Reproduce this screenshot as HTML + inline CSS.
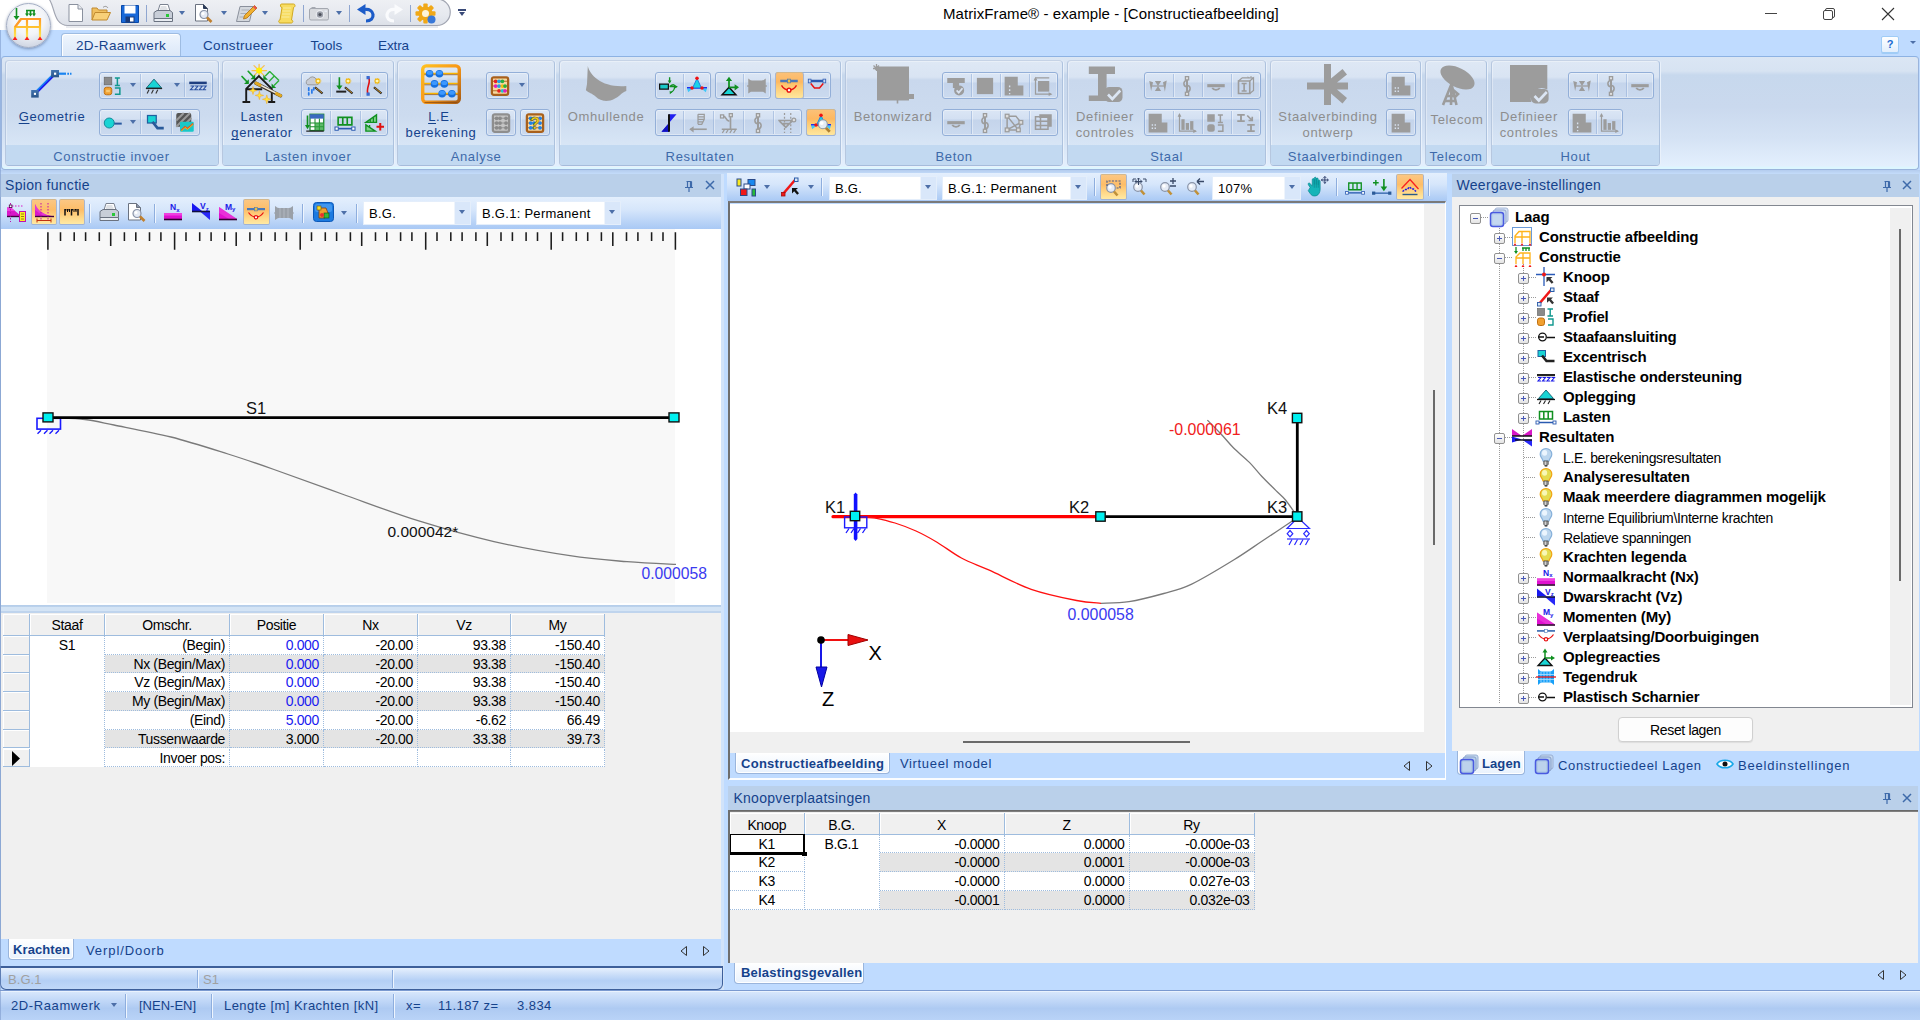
<!DOCTYPE html>
<html lang="nl"><head><meta charset="utf-8"><title>MatrixFrame - example - [Constructieafbeelding]</title>
<style>
*{box-sizing:border-box}
html,body{margin:0;padding:0}
body{width:1920px;height:1020px;position:relative;overflow:hidden;background:#bfdbff;font-family:"Liberation Sans",sans-serif;font-size:13px;color:#000}
.a{position:absolute}
.ui{font-family:"Liberation Sans",sans-serif;font-size:13px;letter-spacing:.65px;color:#15428b;white-space:nowrap}
.ms{font-family:"Liberation Sans",sans-serif;font-size:14px;letter-spacing:-.35px;white-space:nowrap;color:#000}
.c{text-align:center}
.r{text-align:right}
svg{position:absolute;overflow:visible}
.grp{position:absolute;top:59.9px;height:105.9px;border:1px solid #aac0de;border-color:#c6d3e6 #adc2de #a6bcdb #b6c7df;border-radius:4px;background:linear-gradient(#dee8f5 0,#d9e4f3 16px,#c9d8ed 19px,#ccdbef 55px,#d8e6f6 85px);box-shadow:1px 0 0 #e9f1fb, 0 1px 0 #e9f1fb, inset 1px 1px 0 rgba(255,255,255,.35)}
.grp .lab{position:absolute;left:0;right:0;bottom:0;height:20px;background:#c2d9f1;border-radius:0 0 3px 3px;text-align:center;line-height:23px;color:#3e6aaa}
.sg{position:absolute;height:27px;border:1px solid #93afd8;border-radius:3px;background:linear-gradient(#dbe6f5 0,#d3e0f2 9px,#c4d4eb 10px,#cbdaef 100%);box-shadow:inset 0 0 0 1px rgba(255,255,255,.35)}
.sg i{position:absolute;top:1px;bottom:1px;width:1px;background:rgba(150,176,216,.6);box-shadow:1px 0 0 rgba(255,255,255,.4)}
u{text-decoration-skip-ink:none;text-underline-offset:1.5px}
.hot{position:absolute;top:-1px;bottom:-1px;border:1px solid #c2a36b;border-color:#d4b88c #a9b6cf #9fb2d4 #a9b6cf;border-radius:3px;background:linear-gradient(#fbc178 0,#fdb861 9px,#fdc66f 12px,#ffe79c 100%)}
.big{position:absolute;text-align:center;line-height:16px}
.dis{color:#8d8d8d}
.hdr{position:absolute;height:23px;background:#bad0ea;line-height:22px;padding-left:5px;font-size:14px !important;letter-spacing:.3px !important}
.tb{position:absolute;background:linear-gradient(#e4effd 0,#d6e6fb 40%,#b4d0f6 85%,#a9c9f5 100%)}
.combo{position:absolute;height:24px;background:#fff;border:1px solid #e4eefb;font-size:13px;letter-spacing:.28px;line-height:23.5px;padding-left:5px;color:#000;white-space:nowrap}
.combo b{position:absolute;right:0;top:0;bottom:0;width:16px;background:#d9e7fa;border-left:1px solid #eef4fc}
.combo b:after{content:"";position:absolute;left:4px;top:8px;border:3.5px solid transparent;border-top:4px solid #4d6fa8;border-bottom:0}
.dd{position:absolute;width:0;height:0;border:3.5px solid transparent;border-top:4px solid #4d6fa8;border-bottom:0}
.tabstrip{position:absolute;height:24px;background:#bfdbff}
.tab{position:absolute;top:0;height:21px;border:1px solid #9ab5dc;border-top:0;border-radius:0 0 4px 4px;background:linear-gradient(#fff,#e9f2fd);line-height:19px;font-weight:bold;letter-spacing:.1px;padding:0 5px;color:#15428b;box-shadow:inset 0 0 0 1px #fff}
.gh{position:absolute;background:#f0f0f0;border-right:1px solid #9ebcde;border-bottom:1px solid #9ebcde;box-shadow:inset 1px 1px 0 #fff;text-align:center;line-height:22px;height:21px}
.gc{position:absolute;height:19px;line-height:18px;padding:0 4px;border-right:1px dotted #9ebcde;border-bottom:1px dotted #9ebcde;background:#fff}
.tr{position:absolute;left:0;height:20px;line-height:19px;font-family:"Liberation Sans",sans-serif;font-size:14.5px;letter-spacing:.25px;white-space:nowrap;color:#000}
.tr b{letter-spacing:.15px}
</style></head>
<body>
<!-- top -->
<div class="a" style="left:0;top:0;width:1920px;height:30px;background:#fff"></div>
<div class="a" style="left:0;top:30px;width:1920px;height:27px;background:#bfdbff"></div>
<svg style="left:0;top:0" width="470" height="30" viewBox="0 0 470 30"><defs><linearGradient id="qg" x1="0" y1="0" x2="0" y2="1"><stop offset="0" stop-color="#eef0f4"/><stop offset=".6" stop-color="#e6e9ef"/><stop offset="1" stop-color="#dce0e8"/></linearGradient></defs><path d="M49 -1C55 6 53 25.500 68 25.500H437A13.200 13.200 0 0 0 437 -1Z" fill="url(#qg)" stroke="#a2a6b2" stroke-width="1.200"/><path d="M66 27H438" stroke="#d4d8e0" stroke-width="1"/></svg>
<div class="a" style="left:6px;top:3px;width:45px;height:45px;border-radius:50%;background:radial-gradient(circle at 50% 35%,#ffffff 0,#f2f4f8 45%,#d4dae6 75%,#b8c2d4 100%);border:1px solid #a4aec4;box-shadow:0 1px 3px rgba(60,80,120,.55)"></div>
<svg style="left:11px;top:7px" width="34" height="36" viewBox="0 0 34 36"><defs><linearGradient id="og" x1="0" y1="0" x2="0" y2="1"><stop offset="0" stop-color="#ff9a2a"/><stop offset=".5" stop-color="#ffc830"/><stop offset="1" stop-color="#ffe860"/></linearGradient></defs><path d="M4 31V20L10 12h19v19M4 20h25M16 12v19" fill="none" stroke="url(#og)" stroke-width="2.200"/><path d="M4 20 10 12" stroke="#ff9a2a" stroke-width="2"/><path d="M1.500 33 4 29.500 6.500 33ZM13.500 33 16 29.500 18.500 33ZM26.500 33 29 29.500 31.500 33Z" fill="#f82020"/><g stroke="#109020" stroke-width="1.600" fill="none"><path d="M5.500 1v10M15 3.500h9M16 3.500V7M19.500 3.500V7M23 3.500V7"/></g><path d="M2.500 9l3 4 3-4ZM14 6.500l2 3 2-3ZM17.500 6.500l2 3 2-3ZM21 6.500l2 3 2-3Z" fill="#109020"/></svg>
<svg style="left:68px;top:4px" width="16" height="18" viewBox="0 0 16 18"><path d="M1 .5h9l4.500 4.500v12.500H1Z" fill="#fff" stroke="#8a919e" stroke-width="1"/><path d="M10 .5V5h4.500" fill="#e8ebf0" stroke="#8a919e" stroke-width="1"/></svg>
<svg style="left:91px;top:5px" width="20" height="16" viewBox="0 0 20 16"><path d="M1 15V3h5l1.500 2H16v3" fill="#f0c060" stroke="#c08a30" stroke-width="1"/><path d="M1 15 4 7.500h15.500L16 15Z" fill="#f8d078" stroke="#c08a30" stroke-width="1"/><path d="M12 2.500c2-2 4-1 5 .5" fill="none" stroke="#909090" stroke-width="1"/></svg>
<svg style="left:121px;top:5px" width="18" height="18" viewBox="0 0 18 18"><path d="M.5.5h17v17H.5Z" fill="#1868d8" stroke="#0848a8"/><rect x="3.500" y="0.500" width="11" height="8" fill="#fff"/><rect x="4.500" y="11.500" width="9" height="6" fill="#1a3a78"/><rect x="9" y="12.500" width="3.500" height="4" fill="#fff"/></svg>
<div class="a" style="left:146px;top:5px;width:1px;height:17px;background:#8fa6d0"></div>
<svg style="left:153px;top:4px" width="20" height="19" viewBox="0 0 20 19"><path d="M5 7 7 .5h8L17 7Z" fill="#fff" stroke="#7a8290" stroke-width="1"/><path d="M7.500 3h6M7 5h7.500" stroke="#b0b6c0" stroke-width=".8"/><path d="M1 8.500 4 6.500h13l2.500 2v6H1Z" fill="#c8ced8" stroke="#6a7280" stroke-width="1"/><path d="M1 14.500h18.500v3H1Z" fill="#e8ecf2" stroke="#6a7280" stroke-width="1"/><rect x="13" y="10" width="3" height="3" fill="#28c838"/></svg>
<div class="dd" style="left:179px;top:11px"></div>
<svg style="left:194px;top:4px" width="20" height="20" viewBox="0 0 20 20"><path d="M1.500 .5h8L13.500 4.500V17h-12Z" fill="#fff" stroke="#6a7280" stroke-width="1"/><path d="M9.500 .5V4.500h4" fill="#2a3a58" stroke="#2a3a58"/><circle cx="10" cy="10.500" r="4" fill="#e4eaf4" stroke="#8a94a8" stroke-width="1.200"/><circle cx="9" cy="9.500" r="1.500" fill="#fff"/><path d="M13 13.500 17.500 18" stroke="#c08030" stroke-width="2.600"/></svg>
<div class="dd" style="left:221px;top:11px"></div>
<svg style="left:236px;top:4px" width="22" height="20" viewBox="0 0 22 20"><path d="M4 2.500h13l-3.500 15H.5Z" fill="#d4d8de" stroke="#8a909c" stroke-width="1"/><path d="M5.500 6h8M4.500 9.500h8M3.500 13h6" stroke="#a8aeb8" stroke-width="1"/><path d="M18.500 1.500 21 4 11 14l-3.500 1 1-3.500Z" fill="#f0b030" stroke="#b07010" stroke-width=".8"/><path d="M18.500 1.500 21 4l-1.500 1.500L17 3Z" fill="#e85050"/></svg>
<div class="dd" style="left:262px;top:11px"></div>
<svg style="left:277px;top:3px" width="20" height="21" viewBox="0 0 20 21"><path d="M4.500 1h12c2 0 2 3 0 3.500l-2 12.500c1.500 0 2 2.500 0 3H3c-2-.5-1.500-3 0-3L5 4.500c-2 0-2-3.500-.5-3.500Z" fill="#f8dc60" stroke="#d0a820" stroke-width="1"/><path d="M6 5h8M5.500 8h8M5 11h8M4.500 14h8" stroke="#f8eca0" stroke-width="1"/></svg>
<div class="a" style="left:303px;top:5px;width:1px;height:17px;background:#8fa6d0"></div>
<svg style="left:309px;top:7px" width="20" height="14" viewBox="0 0 20 14"><rect x=".5" y="1.500" width="19" height="11.500" rx="1.500" fill="#d8dade" stroke="#a4a8b0"/><rect x="2.500" y="0" width="4" height="2" fill="#a4a8b0"/><circle cx="11" cy="7.500" r="3.800" fill="#9a9ea8" stroke="#eceef2" stroke-width="1.200"/><circle cx="11" cy="7.500" r="1.600" fill="#4a4e58"/><rect x="15.500" y="3.500" width="2.500" height="1.500" fill="#e8ecf4"/></svg>
<div class="dd" style="left:336px;top:11px"></div>
<div class="a" style="left:349px;top:5px;width:1px;height:17px;background:#8fa6d0"></div>
<svg style="left:356px;top:4px" width="20" height="19" viewBox="0 0 20 19"><path d="M10 17c5 0 7.500-3 7-6.500C16.500 7 13.500 5 9 5.500" fill="none" stroke="#1c5cc8" stroke-width="3.200"/><path d="M1 5.500 9.500 0v11Z" fill="#1c5cc8"/></svg>
<svg style="left:384px;top:4px" width="20" height="19" viewBox="0 0 20 19"><path d="M10 17c-5 0-7.500-3-7-6.500C3.500 7 6.500 5 11 5.500" fill="none" stroke="#fafbfd" stroke-width="3.200"/><path d="M19 5.500 10.500 0v11Z" fill="#fafbfd"/></svg>
<div class="a" style="left:410px;top:5px;width:1px;height:17px;background:#8fa6d0"></div>
<svg style="left:415px;top:3px" width="22" height="22" viewBox="0 0 22 22"><g transform="translate(10.500 10.500)"><g fill="#f0a818"><rect x="-2.200" y="-10" width="4.400" height="20" rx="1" transform="rotate(0)"/><rect x="-2.200" y="-10" width="4.400" height="20" rx="1" transform="rotate(45)"/><rect x="-2.200" y="-10" width="4.400" height="20" rx="1" transform="rotate(90)"/><rect x="-2.200" y="-10" width="4.400" height="20" rx="1" transform="rotate(135)"/></g><circle r="7" fill="#f0a818"/><circle r="3.500" fill="#fdf4d8"/></g><circle cx="16.500" cy="16.500" r="4" fill="#3878d8"/></svg>
<div class="a" style="left:458px;top:9px;width:8px;height:1.500px;background:#3a4a78"></div><div class="dd" style="left:458.500px;top:12px;border-top-color:#3a4a78"></div>
<div class="a" style="left:943px;top:5px;font-size:15px;letter-spacing:.08px;color:#000;white-space:nowrap;line-height:18px">MatrixFrame® - example - [Constructieafbeelding]</div>
<div class="a" style="left:1765px;top:13px;width:12px;height:1px;background:#444"></div>
<svg style="left:1823px;top:8px" width="12" height="12" viewBox="0 0 12 12"><rect x=".5" y="2.500" width="9" height="9" rx="1.500" fill="none" stroke="#444" stroke-width="1"/><path d="M2.500 2.500V2A1.500 1.500 0 0 1 4 .5h6A1.500 1.500 0 0 1 11.500 2v6A1.500 1.500 0 0 1 10 9.500h-.5" fill="none" stroke="#444" stroke-width="1"/></svg>
<svg style="left:1882px;top:8px" width="12" height="12" viewBox="0 0 12 12"><path d="M0 0 12 12M12 0 0 12" stroke="#333" stroke-width="1.100"/></svg>
<div class="a" style="left:61px;top:33px;width:120px;height:25px;border:1px solid #9ebce2;border-bottom:0;border-radius:4px 4px 0 0;background:linear-gradient(#f0f6fd,#e4eefb 50%,#dbe7f6);box-shadow:inset 1px 1px 0 #fff"></div>
<div class="a ui" style="left:76px;top:38px;line-height:16px;font-size:13.500px;letter-spacing:0.35px">2D-Raamwerk</div>
<div class="a ui" style="left:203px;top:38px;line-height:16px;font-size:13.500px;letter-spacing:0.35px">Construeer</div>
<div class="a ui" style="left:310.5px;top:38px;line-height:16px;font-size:13.500px;letter-spacing:0.08px">Tools</div>
<div class="a ui" style="left:378px;top:38px;line-height:16px;font-size:13.500px;letter-spacing:-0.12px">Extra</div>
<div class="a" style="left:1881px;top:36px;width:18px;height:17px;border:1px solid #a0ccf6;border-radius:2px;background:linear-gradient(#fff,#e2eefc);box-shadow:0 1px 0 #a0ccf6;font-weight:bold;font-size:11px;color:#1a6ad0;text-align:center;line-height:15px">?</div>
<div class="dd" style="left:1910px;top:41px;border-width:3px;border-top-width:3.500px"></div>
<!-- ribbon -->
<div class="a" style="left:1.4px;top:56.2px;width:1917.2px;height:113.5px;border:1px solid #9ab4dc;border-top-color:#8db2e3;border-radius:4px;background:linear-gradient(#dbe6f4 0,#d7e3f2 14px,#c7d8ed 18px,#cad9ee 50px,#d4e2f4 80px,#e3effd 108px);box-shadow:inset 0 -2.5px 0 #ddf6ff"></div>
<div class="a" style="left:0;top:169.7px;width:1920px;height:4.3px;background:linear-gradient(#b4ccee,#c4dcfa)"></div>
<div class="grp" style="left:4.5px;width:214px"><div class="lab ui" style="color:#3e6aaa">Constructie invoer</div></div>
<div class="grp" style="left:222.4px;width:171.5px"><div class="lab ui" style="color:#3e6aaa">Lasten invoer</div></div>
<div class="grp" style="left:397.4px;width:157.4px"><div class="lab ui" style="color:#3e6aaa">Analyse</div></div>
<div class="grp" style="left:558.9px;width:282.1px"><div class="lab ui" style="color:#3e6aaa">Resultaten</div></div>
<div class="grp" style="left:844.9px;width:218.5px"><div class="lab ui" style="color:#3e6aaa">Beton</div></div>
<div class="grp" style="left:1067.4px;width:198.6px"><div class="lab ui" style="color:#3e6aaa">Staal</div></div>
<div class="grp" style="left:1270px;width:150.8px"><div class="lab ui" style="color:#3e6aaa">Staalverbindingen</div></div>
<div class="grp" style="left:1424.8px;width:62.6px"><div class="lab ui" style="color:#3e6aaa">Telecom</div></div>
<div class="grp" style="left:1491.4px;width:168.3px"><div class="lab ui" style="color:#3e6aaa">Hout</div></div>
<svg style="left:30px;top:68px" width="44" height="32" viewBox="0 0 44 32"><defs><linearGradient id="gsq" x1="0" y1="0" x2="0" y2="1"><stop offset="0" stop-color="#4274b0"/><stop offset="1" stop-color="#2a5488"/></linearGradient></defs><path d="M5 25.800 25 5.700" stroke="#1a1af0" stroke-width="2.800"/><path d="M4.300 25.100 24.300 5" stroke="#1a8af4" stroke-width="1.400"/><path d="M29 5.700h7" stroke="#1a84f0" stroke-width="2.200"/><path d="M37.300 5.700h1.700M40 5.700h1.500" stroke="#1a84f0" stroke-width="2"/><rect x="1.200" y="22" width="7.500" height="7.600" fill="url(#gsq)"/><rect x="3.900" y="24.800" width="2.100" height="2.100" fill="#fff"/><rect x="21.100" y="2" width="7.900" height="7.300" fill="url(#gsq)"/><rect x="24" y="4.600" width="2.200" height="2.200" fill="#fff"/></svg><div class="big ui " style="left:-8px;top:109px;width:120px"><u>G</u>eometrie</div>
<svg style="left:241px;top:64px" width="40" height="40" viewBox="0 0 40 40"><g stroke="#f8c050" stroke-width="1.300" stroke-linecap="round"><path d="M18.100 0.500v12M11 6.600h14.500M13 1.600l10.200 10M23.200 1.600l-10.200 10"/></g><circle cx="18.100" cy="6.600" r="3" fill="#fff000"/><g stroke="#18a028" stroke-width="1.700" stroke-linecap="round"><path d="M1 12.500l5.500 5.800M7.200 7.300l5.500 6"/></g><path d="M7.800 15.200v4.800H3ZM14.200 10.400v4.800H9.400Z" fill="#109020"/><g fill="none" stroke="#2cb038" stroke-width="1.400"><path d="M28.700 7.600l9.300 8.800M28.700 7.600l-4.600 4.600M33.300 12l-5.300 5.400M38 16.400l-5 5"/></g><path d="M22.300 11v4.700h4.700ZM30.600 19.500v4.600h4.600Z" fill="#109020"/><g fill="none" stroke="#1a1a1a" stroke-width="1.900" stroke-linejoin="miter"><path d="M5.200 37.500V24.800L17.900 12l12.900 12.800V37.500M5.200 25.300h16"/></g><path d="M1.500 38h7.700M27.200 38h7" stroke="#1a1a1a" stroke-width="1.800"/><path d="M15 19.300 39.500 31.700" stroke="#3a3020" stroke-width="3.400" stroke-linecap="round"/><path d="M15 19 39.500 31.300" stroke="#e8e4d8" stroke-width="1.600" stroke-linecap="round"/><path d="M15 19.200l4 2M35.500 29.600l4 2" stroke="#e0a820" stroke-width="3" stroke-linecap="round"/><path d="M12 22.5L12.88 25.62L16 26.5L12.88 27.38L12 30.5L11.12 27.38L8 26.5L11.12 25.62Z" fill="#ffe838" stroke="#f0a020" stroke-width=".5"/><path d="M18.4 27.2L19.323999999999998 30.476L22.599999999999998 31.4L19.323999999999998 32.324L18.4 35.6L17.476 32.324L14.2 31.4L17.476 30.476Z" fill="#ffe838" stroke="#f0a020" stroke-width=".5"/><path d="M25.8 30.9L26.768 34.331999999999994L30.200000000000003 35.3L26.768 36.268L25.8 39.699999999999996L24.832 36.268L21.4 35.3L24.832 34.331999999999994Z" fill="#ffe838" stroke="#f0a020" stroke-width=".5"/></svg><div class="big ui " style="left:202px;top:109px;width:120px">Lasten<br><u>g</u>enerator</div>
<svg style="left:421.2px;top:63.7px" width="40" height="40" viewBox="0 0 40 40"><defs><linearGradient id="abg" x1="0" y1="0" x2="1" y2="1"><stop offset="0" stop-color="#ffc020"/><stop offset=".5" stop-color="#f89818"/><stop offset="1" stop-color="#a85c14"/></linearGradient></defs><path d="M3 9.5 h34" stroke="#f8b400" stroke-width="1.500"/><path d="M3 10.700000000000001 h34" stroke="#9a5a18" stroke-width=".8"/><path d="M3 19.599999999999998 h34" stroke="#f8b400" stroke-width="1.500"/><path d="M3 20.799999999999997 h34" stroke="#9a5a18" stroke-width=".8"/><path d="M3 29.4 h34" stroke="#f8b400" stroke-width="1.500"/><path d="M3 30.599999999999998 h34" stroke="#9a5a18" stroke-width=".8"/><rect x="1.700" y="1.900" width="36.600" height="36.400" rx="3.500" fill="none" stroke="url(#abg)" stroke-width="3.400"/><path d="M3.500 38.500h33" stroke="#8a4a10" stroke-width="1.200" opacity=".7"/><circle cx="8.6" cy="9.8" r="3.800" fill="#1470e0"/><ellipse cx="8.6" cy="8.8" rx="3" ry="2" fill="#3c98ff"/><circle cx="18.4" cy="9.8" r="3.800" fill="#1470e0"/><ellipse cx="18.4" cy="8.8" rx="3" ry="2" fill="#3c98ff"/><circle cx="13.5" cy="19.9" r="3.800" fill="#1470e0"/><ellipse cx="13.5" cy="18.9" rx="3" ry="2" fill="#3c98ff"/><circle cx="23.3" cy="19.9" r="3.800" fill="#1470e0"/><ellipse cx="23.3" cy="18.9" rx="3" ry="2" fill="#3c98ff"/><circle cx="21.1" cy="29.8" r="3.800" fill="#1470e0"/><ellipse cx="21.1" cy="28.8" rx="3" ry="2" fill="#3c98ff"/><circle cx="30.9" cy="29.8" r="3.800" fill="#1470e0"/><ellipse cx="30.9" cy="28.8" rx="3" ry="2" fill="#3c98ff"/></svg><div class="big ui " style="left:381px;top:109px;width:120px"><u>L</u>.E.<br>berekening</div>
<svg style="left:585px;top:66px" width="43" height="37" viewBox="0 0 43 37"><path d="M2.800 0C5 10 18 22 41.300 20V25C36 27 34 31 30 32.500 26 35 22 35 18.800 34.800 14 34 11 31 9.400 29.500 6 27 2 26 .900 24L2 18Z" fill="#9c9c9c"/></svg><div class="big ui dis" style="left:546px;top:109px;width:120px;color:#8d8d8d">Omhullende</div>
<svg style="left:871.5px;top:64px" width="43" height="40" viewBox="0 0 43 40"><path d="M5 2.500h32v34H5Z" fill="#9c9c9c"/><path d="M1 4.500h6M4.500 0v7M1.500 1.500l5 5M7 1.500l-4 4" stroke="#9c9c9c" stroke-width="1.300"/><path d="M37 30h5v5h-5Z" fill="#9c9c9c"/><path d="M25.500 36v3.500" stroke="#9c9c9c" stroke-width="1.600"/></svg><div class="big ui dis" style="left:833px;top:109px;width:120px;color:#8d8d8d">Betonwizard</div>
<svg style="left:1088px;top:66px" width="35" height="36" viewBox="0 0 35 36"><path d="M.800 .400h26.200v7.600h-8.400v21.500H20V35H.800v-5.500H10V8H.800Z" fill="#9c9c9c"/><rect x="16.700" y="21" width="17.800" height="15" rx="4.500" fill="#9c9c9c"/><path d="M20 28.500l4.300 4.500 8-8.500" fill="none" stroke="#dbe5f3" stroke-width="2.600"/></svg><div class="big ui dis" style="left:1045px;top:109px;width:120px;color:#8d8d8d">Definieer<br>controles</div>
<svg style="left:1307px;top:63.5px" width="41" height="41" viewBox="0 0 41 41"><path d="M17 0h7v14.500L35.500 5l4.500 5.500-10 8H41v7H30l10 8.500L35.500 39.500 24 29.500V41h-7V25.500H0V18.500h17Z" fill="#9c9c9c"/></svg><div class="big ui dis" style="left:1268px;top:109px;width:120px;color:#8d8d8d">Staalverbinding<br>ontwerp</div>
<svg style="left:1438px;top:65px" width="38" height="41" viewBox="0 0 38 41"><ellipse cx="19.500" cy="12.500" rx="18.500" ry="9.600" transform="rotate(27 19.500 12.500)" fill="#9c9c9c"/><path d="M13.500 19 5 40M13.500 19l5 21M13.500 19l-.5 21M8.500 31h9M6.800 36h11.200M14 24l6 5-4 4" stroke="#9c9c9c" stroke-width="2.600" fill="none"/></svg><div class="big ui dis" style="left:1397px;top:112px;width:120px;color:#8d8d8d">Telecom</div>
<svg style="left:1510px;top:65px" width="39" height="39" viewBox="0 0 39 39"><path d="M0 0h37.300v24.500a11 11 0 0 0-16 12.500H0Z" fill="#9c9c9c"/><rect x="21" y="24" width="17.600" height="14.400" rx="4.500" fill="#9c9c9c"/><path d="M24.500 31l4.300 4.500 8-8.500" fill="none" stroke="#dbe5f3" stroke-width="2.600"/></svg><div class="big ui dis" style="left:1469px;top:109px;width:120px;color:#8d8d8d">Definieer<br>controles</div>
<div class="sg" style="left:99px;top:72.2px;width:114px;height:27.2px"><div class="dd" style="left:30px;top:10px"></div><svg style="left:3px;top:3px" width="20" height="20" viewBox="0 0 16 16"><rect x="1" y="1" width="6" height="6" fill="#8a8a8a" stroke="#6a6a6a" stroke-width=".6"/><rect x="1" y="9" width="6" height="6" rx="1.8" fill="#f0a030" stroke="#c07010" stroke-width=".8"/><rect x="2.5" y="11" width="3" height="2" fill="#f8c870"/><path d="M9.5 1.5h4M9.5 7.5h4M11.5 1.5v6M9.5 9.5h4v5h-4" fill="none" stroke="#11988f" stroke-width="1.2"/></svg><i style="left:40px"></i><div class="dd" style="left:74px;top:10px"></div><svg style="left:44px;top:3px" width="20" height="20" viewBox="0 0 16 16"><path d="M8 2.5 14 9.5H2Z" fill="#19d4d4" stroke="#1a6a78" stroke-width=".8"/><path d="M1.5 10h13" stroke="#222" stroke-width="1"/><path d="M4 11 2.5 14M7.5 11 6 14M11 11 9.5 14" stroke="#333" stroke-width=".9"/></svg><i style="left:84px"></i><svg style="left:88px;top:3px" width="20" height="20" viewBox="0 0 16 16"><rect x="1" y="4.5" width="14" height="2" fill="#1f3f80"/><path d="M2 8h2.5L2 11h2.5M5.5 8H8L5.5 11H8M9 8h2.5L9 11h2.5M12.2 8h2.3l-2.3 3h2.3" fill="none" stroke="#2a50a0" stroke-width=".9"/></svg></div>
<div class="sg" style="left:99px;top:109px;width:101px;height:26.5px"><div class="dd" style="left:30px;top:10px"></div><svg style="left:3px;top:3px" width="20" height="20" viewBox="0 0 16 16"><circle cx="5" cy="8" r="4" fill="#19d4d4" stroke="#158a9a" stroke-width=".8"/><path d="M9 8.5h6" stroke="#2a5aa0" stroke-width="1.6"/></svg><i style="left:40px"></i><svg style="left:45px;top:3px" width="20" height="20" viewBox="0 0 16 16"><rect x="2" y="2" width="7" height="6" fill="#19d4d4" stroke="#2060a0" stroke-width="1"/><path d="M6 7l4 5h5" fill="none" stroke="#2a5a9a" stroke-width="2.2"/></svg><i style="left:71px"></i><svg style="left:75px;top:3px" width="20" height="20" viewBox="0 0 16 16"><rect x="1" y="0" width="12" height="11" rx="1.5" fill="#555"/><path d="M1 6 7 0M1 11 12 0M6 11l7-7" stroke="#999" stroke-width="1.6"/><rect x="4" y="7" width="11" height="8" rx="1" fill="#19c8c8"/><path d="M5 14l3-3 2 1.5 4.5-4" fill="none" stroke="#e8541a" stroke-width="1.3"/><path d="M5 14.6l3-3 2 1.5 4.5-4" fill="none" stroke="#f8d020" stroke-width=".6"/></svg></div>
<div class="sg" style="left:301px;top:72.2px;width:87px;height:27.2px"><svg style="left:3px;top:3px" width="20" height="20" viewBox="0 0 16 16"><path d="M2 7a2.5 2.5 0 0 1 1-4.5 3.2 3.2 0 0 1 6 .6 2 2 0 0 1 0 4Z" fill="#c8ccd4" stroke="#888" stroke-width=".6"/><path d="M3 9.5v2M5.5 11v2.5M3 13.5v1.5M7 9.5v1.5" stroke="#2a7ae8" stroke-width="1.4" stroke-linecap="round"/><path d="M8 9l6 5" stroke="#222" stroke-width="1.8"/><path d="M8.5 9.3l5 4.2" stroke="#e8a020" stroke-width=".7"/><path d="M10.5 1.5v5M8 4h5M8.8 2.2l3.4 3.6M12.2 2.2 8.8 5.8" stroke="#f4b400" stroke-width=".9"/><circle cx="10.5" cy="4" r="1.1" fill="#fff8b0"/></svg><i style="left:28px"></i><svg style="left:33px;top:3px" width="20" height="20" viewBox="0 0 16 16"><path d="M3.5 1v9" stroke="#109020" stroke-width="1.3"/><path d="M1 7.5l2.5 3.5L6 7.5Z" fill="#109020"/><path d="M1 12.5h8" stroke="#222" stroke-width="1.6"/><path d="M8 9l6 5" stroke="#222" stroke-width="1.8"/><path d="M8.5 9.3l5 4.2" stroke="#e8a020" stroke-width=".7"/><path d="M10.5 1.5v5M8 4h5M8.8 2.2l3.4 3.6M12.2 2.2 8.8 5.8" stroke="#f4b400" stroke-width=".9"/><circle cx="10.5" cy="4" r="1.1" fill="#fff8b0"/></svg><i style="left:58px"></i><svg style="left:62px;top:3px" width="20" height="20" viewBox="0 0 16 16"><path d="M3.5 1c3 4-3 9 0 14" fill="none" stroke="#e01010" stroke-width="1.3"/><rect x="2" y="0" width="2.6" height="2.6" fill="#3a6ad0"/><rect x="2" y="13.2" width="2.6" height="2.6" fill="#3a6ad0"/><path d="M8 9l6 5" stroke="#222" stroke-width="1.8"/><path d="M8.5 9.3l5 4.2" stroke="#e8a020" stroke-width=".7"/><path d="M10.5 1.5v5M8 4h5M8.8 2.2l3.4 3.6M12.2 2.2 8.8 5.8" stroke="#f4b400" stroke-width=".9"/><circle cx="10.5" cy="4" r="1.1" fill="#fff8b0"/></svg></div>
<div class="sg" style="left:301px;top:109px;width:87px;height:26.5px"><svg style="left:3px;top:3px" width="20" height="20" viewBox="0 0 16 16"><rect x="4" y="1" width="11" height="13" fill="#fff" stroke="#1a8a2a" stroke-width="1"/><rect x="4" y="1" width="11" height="3.5" fill="#3a6ac0"/><path d="M4 8h11M4 11h11M8 4.5V14M11.5 4.5V14" stroke="#1a8a2a" stroke-width=".8"/><rect x="8" y="8" width="7" height="6" fill="#2aa03a" opacity=".75"/><path d="M2 2v9" stroke="#109020" stroke-width="1.3"/><path d="M0 9.5 2 13l2-3.5Z" fill="#109020"/><path d="M1 14.5h14" stroke="#222" stroke-width="1"/></svg><i style="left:28px"></i><svg style="left:33px;top:3px" width="20" height="20" viewBox="0 0 16 16"><path d="M2.5 3.5h11v6h-11zM6.2 3.5v6M9.8 3.5v6" fill="none" stroke="#109020" stroke-width="1.3"/><path d="M1 12.5h14" stroke="#2a5ab0" stroke-width="1.3"/><rect x="0" y="11.2" width="2.6" height="2.6" fill="#fff" stroke="#2a5ab0" stroke-width=".8"/><rect x="13.4" y="11.2" width="2.6" height="2.6" fill="#fff" stroke="#2a5ab0" stroke-width=".8"/></svg><i style="left:58px"></i><svg style="left:62px;top:3px" width="20" height="20" viewBox="0 0 16 16"><path d="M1.5 7.5 10 1.5v6Z" fill="#7fd08a" stroke="#109020" stroke-width="1.1"/><path d="M5 5v2.5M7.5 3.3v4.2" stroke="#109020" stroke-width="1"/><path d="M1.5 9.5 9 14.5H1.5Z" fill="#7fd08a" stroke="#109020" stroke-width="1.1"/><path d="M4.5 9.5v2" stroke="#109020"/><path d="M13 8v6M10 11h6" stroke="#e01010" stroke-width="1.6"/></svg></div>
<div class="sg" style="left:486px;top:72.2px;width:43px;height:27.2px"><div class="dd" style="left:32px;top:10px"></div><svg style="left:3px;top:3px" width="20" height="20" viewBox="0 0 16 16"><rect x="1.5" y="1" width="13" height="14" rx="1.5" fill="#f8d8a0" stroke="#a8601c" stroke-width="1.8"/><path d="M2 4.2 h12" stroke="#a8601c" stroke-width=".7"/><circle cx="4.5" cy="4.2" r="1.5" fill="#e82020"/><circle cx="7.2" cy="4.2" r="1.5" fill="#20a0e8"/><circle cx="9.9" cy="4.2" r="1.5" fill="#28b040"/><path d="M2 8 h12" stroke="#a8601c" stroke-width=".7"/><circle cx="4.5" cy="8" r="1.5" fill="#e020c0"/><circle cx="7.2" cy="8" r="1.5" fill="#20a0e8"/><circle cx="9.9" cy="8" r="1.5" fill="#f0c010"/><circle cx="12" cy="8" r="1.5" fill="#28b040"/><path d="M2 11.8 h12" stroke="#a8601c" stroke-width=".7"/><circle cx="7.2" cy="11.8" r="1.5" fill="#e82020"/><circle cx="9.9" cy="11.8" r="1.5" fill="#20c8c8"/><circle cx="12" cy="11.8" r="1.5" fill="#e020c0"/></svg></div>
<div class="sg" style="left:486px;top:109px;width:30px;height:26.5px"><svg style="left:4px;top:3px" width="20" height="20" viewBox="0 0 16 16"><rect x="1.5" y="1" width="13" height="14" rx="1.5" fill="#c4c4c4" stroke="#8e8e8e" stroke-width="1.8"/><path d="M2 4.2 h12" stroke="#8e8e8e" stroke-width=".7"/><circle cx="4.5" cy="4.2" r="1.5" fill="#8a8a8a"/><circle cx="7.2" cy="4.2" r="1.5" fill="#8a8a8a"/><circle cx="12" cy="4.2" r="1.5" fill="#8a8a8a"/><path d="M2 8 h12" stroke="#8e8e8e" stroke-width=".7"/><circle cx="4.5" cy="8" r="1.5" fill="#8a8a8a"/><circle cx="7.2" cy="8" r="1.5" fill="#8a8a8a"/><circle cx="12" cy="8" r="1.5" fill="#8a8a8a"/><path d="M2 11.8 h12" stroke="#8e8e8e" stroke-width=".7"/><circle cx="4.5" cy="11.8" r="1.5" fill="#8a8a8a"/><circle cx="7.2" cy="11.8" r="1.5" fill="#8a8a8a"/><circle cx="12" cy="11.8" r="1.5" fill="#8a8a8a"/></svg></div>
<div class="sg" style="left:520px;top:109px;width:30px;height:26.5px"><svg style="left:4px;top:3px" width="20" height="20" viewBox="0 0 16 16"><rect x="1.5" y="1" width="13" height="14" rx="1.5" fill="#f8d8a0" stroke="#a8601c" stroke-width="1.8"/><path d="M2 4.2 h12" stroke="#a8601c" stroke-width=".7"/><circle cx="4.5" cy="4.2" r="1.5" fill="#2080e8"/><circle cx="7.2" cy="4.2" r="1.5" fill="#2080e8"/><circle cx="12" cy="4.2" r="1.5" fill="#2080e8"/><path d="M2 8 h12" stroke="#a8601c" stroke-width=".7"/><circle cx="4.5" cy="8" r="1.5" fill="#2080e8"/><circle cx="7.2" cy="8" r="1.5" fill="#2080e8"/><circle cx="12" cy="8" r="1.5" fill="#2080e8"/><path d="M2 11.8 h12" stroke="#a8601c" stroke-width=".7"/><circle cx="4.5" cy="11.8" r="1.5" fill="#2080e8"/><circle cx="7.2" cy="11.8" r="1.5" fill="#2080e8"/><circle cx="12" cy="11.8" r="1.5" fill="#2080e8"/><text x="8" y="13" font-size="13" font-weight="bold" font-family="Liberation Sans,sans-serif" fill="#f8e020" stroke="#806010" stroke-width=".5" text-anchor="middle">?</text></svg></div>
<div class="sg" style="left:655px;top:72.2px;width:56px;height:27.2px"><svg style="left:3px;top:3px" width="20" height="20" viewBox="0 0 16 16"><rect x=".5" y="6.5" width="7" height="4" fill="#19c8c8" stroke="#111" stroke-width="1"/><path d="M8.5 1v4M8.5 8.5h6M8.5 8.5c2.5-2 4-2 4 0s-1.5 4-3 4.500" fill="none" stroke="#109020" stroke-width="1.1"/><path d="M7 3.5 8.500 6 10 3.500ZM12.500 7l2.500 1.500-2.500 1.500ZM8.500 12l2 1-1.800 1.600Z" fill="#109020"/></svg><i style="left:27px"></i><svg style="left:31px;top:3px" width="20" height="20" viewBox="0 0 16 16"><path d="M0 9.5h16" stroke="#2030f0" stroke-width="1.4"/><path d="M8 2 11.500 9.500H4.500Z" fill="#19d4e8" stroke="#2080e0" stroke-width=".8"/><path d="M0 10h4.500L1 13ZM16 10h-4.500L15 13Z" fill="#40c8f8"/><circle cx="8" cy="1.800" r="1.400" fill="#f01010"/><circle cx="4" cy="9.500" r="1.400" fill="#f01010"/><circle cx="12" cy="9.500" r="1.400" fill="#f01010"/></svg></div>
<div class="sg" style="left:715px;top:72.2px;width:56px;height:27.2px"><svg style="left:3px;top:3px" width="20" height="20" viewBox="0 0 16 16"><path d="M8 9 13.500 15H2.500Z" fill="#19d4d4" stroke="#111" stroke-width="1.2"/><path d="M8 9V2M8 9h6" stroke="#109020" stroke-width="1.4"/><path d="M5.500 4 8 0.500 10.500 4ZM12.500 6.500 16 9l-3.500 2.500Z" fill="#109020"/></svg><i style="left:27px"></i><svg style="left:31px;top:3px" width="20" height="20" viewBox="0 0 16 16"><path d="M1 2c1.500 1 1.500 1.500 3 1.500h8c1.500 0 1.500-.5 3-1.500v12c-1.500-1-1.500-1.500-3-1.500H4c-1.500 0-1.500.5-3 1.500Z" fill="#9c9c9c"/><path d="M0 8h16" stroke="#9c9c9c" stroke-width="1"/></svg></div>
<div class="sg" style="left:775px;top:72.2px;width:56px;height:27.2px"><div class="hot" style="left:-1px;width:29px"></div><svg style="left:3px;top:3px" width="20" height="20" viewBox="0 0 16 16"><rect x="1" y="3" width="14" height="2" fill="#4a78b8"/><rect x="6.800" y="2.500" width="2.400" height="3" fill="#f0c040" stroke="#4a78b8" stroke-width=".6"/><path d="M2 7.500c3 5 9 5 12 0" fill="none" stroke="#e81010" stroke-width="1.100"/><circle cx="8" cy="11.300" r="1.500" fill="#fff" stroke="#e81010" stroke-width="1.100"/></svg><svg style="left:31px;top:3px" width="20" height="20" viewBox="0 0 16 16"><rect x="1" y="3" width="14" height="2" fill="#2a58b0"/><rect x="1" y="2.500" width="2.200" height="3" fill="#c8d8f0" stroke="#2a58b0" stroke-width=".6"/><rect x="12.800" y="2.500" width="2.200" height="3" fill="#c8d8f0" stroke="#2a58b0" stroke-width=".6"/><path d="M3 6l3 3.500h4L13 6" fill="none" stroke="#e81010" stroke-width="1.200"/></svg></div>
<div class="sg" style="left:655px;top:109px;width:147px;height:26.5px"><svg style="left:3px;top:3px" width="20" height="20" viewBox="0 0 16 16"><path d="M8 1h6L8 8ZM8 8v7H2Z" fill="#2020f0"/><path d="M8 8v7H2Z" fill="#1010c0"/><path d="M8 1v14" stroke="#111" stroke-width="1.600"/></svg><i style="left:27px"></i><svg style="left:32px;top:3px" width="20" height="20" viewBox="0 0 16 16"><path d="M8 1h5v4l-2 4H8M8 1v8M8 3h5M8 5h5M8.500 7h3.500" fill="none" stroke="#9c9c9c" stroke-width="1"/><path d="M2 13h13" stroke="#9c9c9c" stroke-width="1.300"/><path d="M1 13l3.500-2.500v5Z" fill="#9c9c9c"/></svg><i style="left:57px"></i><svg style="left:62px;top:3px" width="20" height="20" viewBox="0 0 16 16"><path d="M4 2.500c3 0 2 4 5 4M10 1v12M3 13h12" fill="none" stroke="#9c9c9c" stroke-width="1.300"/><rect x="2" y="1.500" width="2.500" height="2.500" fill="none" stroke="#9c9c9c"/><rect x="9" y="0.500" width="2.500" height="2.500" fill="#ddd" stroke="#9c9c9c"/><path d="M5 13.500 3.500 16M8 13.500 6.500 16M11 13.500 9.500 16M14 13.500 12.500 16" stroke="#9c9c9c"/></svg><i style="left:87px"></i><svg style="left:92px;top:3px" width="20" height="20" viewBox="0 0 16 16"><path d="M8 1v14" stroke="#9c9c9c" stroke-width="1.600"/><path d="M8 3.500a2.500 2.500 0 0 0 0 5M8 7.500a2.500 2.500 0 0 1 0 5" fill="none" stroke="#9c9c9c" stroke-width="1.200"/><rect x="6.700" y="0.500" width="2.600" height="2.600" fill="#ddd" stroke="#9c9c9c"/><rect x="6.700" y="13" width="2.600" height="2.600" fill="#ddd" stroke="#9c9c9c"/></svg><i style="left:117px"></i><svg style="left:121px;top:3px" width="20" height="20" viewBox="0 0 16 16"><path d="M1 6h13M2 6.500l5 5 5-5M4.500 8.500h5" fill="none" stroke="#9c9c9c" stroke-width="1.300"/><path d="M6 0v16M11 0v16" stroke="#9c9c9c" stroke-width="1" stroke-dasharray="1.500 1.500"/><circle cx="13.500" cy="5.500" r="1.500" fill="#ddd" stroke="#9c9c9c"/></svg></div>
<div class="sg" style="left:806px;top:109px;width:30px;height:26.5px"><div class="hot" style="left:-1px;width:30px"></div><svg style="left:4px;top:3px" width="20" height="20" viewBox="0 0 16 16"><path d="M0 9.500h16" stroke="#2030f0" stroke-width="1.400"/><path d="M8 2 11.500 9.500H4.500Z" fill="#19d4e8" stroke="#2080e0" stroke-width=".8"/><path d="M0 10h4.500L1 13ZM16 10h-4.500L15 13Z" fill="#40c8f8"/><circle cx="8" cy="1.800" r="1.400" fill="#f01010"/><circle cx="4" cy="9.500" r="1.400" fill="#f01010"/><path d="M11.500 11.500 15 15" stroke="#b08030" stroke-width="2.200"/><circle cx="9.500" cy="9" r="3.600" fill="#e4ecf4" stroke="#8a98a8" stroke-width=".9"/><circle cx="8.600" cy="8" r="1.500" fill="#fff"/></svg></div>
<div class="sg" style="left:942px;top:72.2px;width:116px;height:27.2px"><svg style="left:3px;top:3px" width="20" height="20" viewBox="0 0 16 16"><path d="M1 1.500h14v4h-4.500v4h-5v-4H1Z" fill="#9c9c9c"/><circle cx="10.500" cy="11.500" r="4" fill="#9c9c9c"/><path d="M8.500 11.500l1.700 1.800 3-3.500" fill="none" stroke="#d8e2f0" stroke-width="1.400"/></svg><i style="left:28px"></i><svg style="left:32px;top:3px" width="20" height="20" viewBox="0 0 16 16"><rect x="1.500" y="1.500" width="13" height="13" fill="#9c9c9c"/></svg><i style="left:57px"></i><svg style="left:61px;top:3px" width="20" height="20" viewBox="0 0 16 16"><path d="M.5 .5h10.500v7h4.500v8H.5Z" fill="#9c9c9c"/><path d="M4.500 7.500v1.500M4.500 10.500v1.500M4.500 13.500v1" stroke="#d8e2f0" stroke-width="1.100"/></svg><i style="left:86px"></i><svg style="left:90px;top:3px" width="20" height="20" viewBox="0 0 16 16"><rect x="4" y="4" width="9" height="8.500" fill="#9c9c9c"/><path d="M2 1.500v13h12.500M2 1.500h11" fill="none" stroke="#9c9c9c" stroke-width="1"/><path d="M.5 3.500 2 .5l1.500 3ZM12.500 13l3 1.500-3 1.500Z" fill="#9c9c9c"/></svg></div>
<div class="sg" style="left:942px;top:109px;width:116px;height:26.5px"><svg style="left:3px;top:3px" width="20" height="20" viewBox="0 0 16 16"><path d="M1 6.500h14v2.500H1Z" fill="#9c9c9c"/><path d="M5 9.500c1 2 5 2 6 0" fill="none" stroke="#9c9c9c" stroke-width="1.400"/></svg><i style="left:28px"></i><svg style="left:32px;top:3px" width="20" height="20" viewBox="0 0 16 16"><path d="M8 1v14" stroke="#9c9c9c" stroke-width="1.600"/><path d="M8 3.500a2.500 2.500 0 0 0 0 5M8 7.500a2.500 2.500 0 0 1 0 5" fill="none" stroke="#9c9c9c" stroke-width="1.200"/><rect x="6.700" y="0.500" width="2.600" height="2.600" fill="#ddd" stroke="#9c9c9c"/><rect x="6.700" y="13" width="2.600" height="2.600" fill="#ddd" stroke="#9c9c9c"/></svg><i style="left:57px"></i><svg style="left:61px;top:3px" width="20" height="20" viewBox="0 0 16 16"><path d="M2.500 2.500h7l4 5-2 6h-9ZM2.500 2.500l9 11M2.500 13.500l11-6" fill="none" stroke="#9c9c9c" stroke-width="1.200"/><rect x="1" y="1" width="3" height="3" fill="#ddd" stroke="#9c9c9c"/><rect x="1" y="12" width="3" height="3" fill="#ddd" stroke="#9c9c9c"/><rect x="10" y="12" width="3" height="3" fill="#ddd" stroke="#9c9c9c"/><rect x="12" y="6" width="3" height="3" fill="#ddd" stroke="#9c9c9c"/></svg><i style="left:86px"></i><svg style="left:90px;top:3px" width="20" height="20" viewBox="0 0 16 16"><path d="M2 3h10v10H2ZM2 6.500h10M2 10h10M6 3v10" fill="none" stroke="#9c9c9c" stroke-width="1.200"/><path d="M5 1h10v10h-3V4H5Z" fill="#9c9c9c"/></svg></div>
<div class="sg" style="left:1144px;top:72.2px;width:117px;height:27.2px"><svg style="left:3px;top:3px" width="20" height="20" viewBox="0 0 16 16"><path d="M1 4l3 1-1.500 7ZM15 3.500l-3 1.500 1.500 7.500ZM5.500 4h5L8 8ZM5.500 12h5L8 8Z" fill="#9c9c9c"/><path d="M3 8h10" stroke="#9c9c9c" stroke-width="1"/></svg><i style="left:28px"></i><svg style="left:32px;top:3px" width="20" height="20" viewBox="0 0 16 16"><path d="M8 1v14" stroke="#9c9c9c" stroke-width="1.600"/><path d="M8 3.500a2.500 2.500 0 0 0 0 5M8 7.500a2.500 2.500 0 0 1 0 5" fill="none" stroke="#9c9c9c" stroke-width="1.200"/><rect x="6.700" y="0.500" width="2.600" height="2.600" fill="#ddd" stroke="#9c9c9c"/><rect x="6.700" y="13" width="2.600" height="2.600" fill="#ddd" stroke="#9c9c9c"/></svg><i style="left:57px"></i><svg style="left:61px;top:3px" width="20" height="20" viewBox="0 0 16 16"><path d="M1 6.500h14v2.500H1Z" fill="#9c9c9c"/><path d="M5 9.500c1 2 5 2 6 0" fill="none" stroke="#9c9c9c" stroke-width="1.400"/></svg><i style="left:86px"></i><svg style="left:91px;top:3px" width="20" height="20" viewBox="0 0 16 16"><path d="M2 4h9v10H2ZM4.500 6h4M4.500 12h4M6.500 6v6" fill="none" stroke="#9c9c9c" stroke-width="1.300"/><path d="M11 4l3-2.500v10L11 14M2 4l3-2.500h9" fill="none" stroke="#9c9c9c" stroke-width="1"/><path d="M9.500 0.500l.8 2M12 0v2" stroke="#9c9c9c" stroke-width=".8" stroke-dasharray="1 1"/></svg></div>
<div class="sg" style="left:1144px;top:109px;width:117px;height:26.5px"><svg style="left:3px;top:3px" width="20" height="20" viewBox="0 0 16 16"><path d="M.5 .5h10.500v7h4.500v8H.5Z" fill="#9c9c9c"/><path d="M3.500 9v1.200M5.800 9v1.200M3.500 11.500v1.200M5.800 11.500v1.200" stroke="#d8e2f0" stroke-width="1.100"/></svg><i style="left:28px"></i><svg style="left:32px;top:3px" width="20" height="20" viewBox="0 0 16 16"><path d="M2 1v13.500h13" fill="none" stroke="#9c9c9c" stroke-width="1"/><path d="M.5 3 2 0l1.500 3ZM13 13l3 1.500-3 1.500Z" fill="#9c9c9c"/><rect x="3.500" y="5" width="2.600" height="8.500" fill="#9c9c9c"/><rect x="7" y="8" width="2.600" height="5.500" fill="#9c9c9c"/><rect x="10.500" y="6.500" width="2.600" height="7" fill="#9c9c9c"/></svg><i style="left:57px"></i><svg style="left:61px;top:3px" width="20" height="20" viewBox="0 0 16 16"><rect x="1" y="1" width="6" height="6" fill="#9c9c9c"/><rect x="1" y="9" width="6" height="6" rx="2" fill="#9c9c9c"/><path d="M9.500 1.500h4M9.500 7.500h4M11.500 1.500v6M9.500 9.500h4v5h-4" fill="none" stroke="#9c9c9c" stroke-width="1.200"/></svg><i style="left:86px"></i><svg style="left:91px;top:3px" width="20" height="20" viewBox="0 0 16 16"><path d="M1 1.500h6M1 6.500h6M4 1.500v5M9 9.500h6M9 14.500h6M12 9.500v5" fill="none" stroke="#9c9c9c" stroke-width="1.500"/><path d="M9 2l4 4M13 3v3h-3" fill="none" stroke="#9c9c9c" stroke-width="1.300"/></svg></div>
<div class="sg" style="left:1386px;top:72.2px;width:30px;height:27.2px"><svg style="left:4px;top:3px" width="20" height="20" viewBox="0 0 16 16"><path d="M.5 .5h10.500v7h4.500v8H.5Z" fill="#9c9c9c"/><path d="M3.500 9v1.200M5.800 9v1.200M3.500 11.500v1.200M5.800 11.500v1.200" stroke="#d8e2f0" stroke-width="1.100"/></svg></div>
<div class="sg" style="left:1386px;top:109px;width:30px;height:26.5px"><svg style="left:4px;top:3px" width="20" height="20" viewBox="0 0 16 16"><path d="M.5 .5h10.500v7h4.500v8H.5Z" fill="#9c9c9c"/><path d="M3.500 9v1.200M5.800 9v1.200M3.500 11.500v1.200M5.800 11.500v1.200" stroke="#d8e2f0" stroke-width="1.100"/></svg></div>
<div class="sg" style="left:1568px;top:72.2px;width:86px;height:27.2px"><svg style="left:3px;top:3px" width="20" height="20" viewBox="0 0 16 16"><path d="M1 4l3 1-1.500 7ZM15 3.500l-3 1.500 1.500 7.500ZM5.500 4h5L8 8ZM5.500 12h5L8 8Z" fill="#9c9c9c"/><path d="M3 8h10" stroke="#9c9c9c" stroke-width="1"/></svg><i style="left:28px"></i><svg style="left:32px;top:3px" width="20" height="20" viewBox="0 0 16 16"><path d="M8 1v14" stroke="#9c9c9c" stroke-width="1.600"/><path d="M8 3.500a2.500 2.500 0 0 0 0 5M8 7.500a2.500 2.500 0 0 1 0 5" fill="none" stroke="#9c9c9c" stroke-width="1.200"/><rect x="6.700" y="0.500" width="2.600" height="2.600" fill="#ddd" stroke="#9c9c9c"/><rect x="6.700" y="13" width="2.600" height="2.600" fill="#ddd" stroke="#9c9c9c"/></svg><i style="left:57px"></i><svg style="left:61px;top:3px" width="20" height="20" viewBox="0 0 16 16"><path d="M1 6.500h14v2.500H1Z" fill="#9c9c9c"/><path d="M5 9.500c1 2 5 2 6 0" fill="none" stroke="#9c9c9c" stroke-width="1.400"/></svg></div>
<div class="sg" style="left:1568px;top:109px;width:55px;height:26.5px"><svg style="left:3px;top:3px" width="20" height="20" viewBox="0 0 16 16"><path d="M.5 .5h10.500v7h4.500v8H.5Z" fill="#9c9c9c"/><path d="M4.500 7.500v1.500M4.500 10.500v1.500M4.500 13.500v1" stroke="#d8e2f0" stroke-width="1.100"/></svg><i style="left:27px"></i><svg style="left:30px;top:3px" width="20" height="20" viewBox="0 0 16 16"><path d="M2 1v13.500h13" fill="none" stroke="#9c9c9c" stroke-width="1"/><path d="M.5 3 2 0l1.500 3ZM13 13l3 1.500-3 1.500Z" fill="#9c9c9c"/><rect x="3.500" y="5" width="2.600" height="8.500" fill="#9c9c9c"/><rect x="7" y="8" width="2.600" height="5.500" fill="#9c9c9c"/><rect x="10.500" y="6.500" width="2.600" height="7" fill="#9c9c9c"/></svg></div>
<!-- left -->
<div class="a" style="left:0;top:174px;width:722px;height:765px;background:#f0f0f0"></div>
<div class="a" style="left:721px;top:174px;width:3px;height:816px;background:#d1e3fa"></div>
<div class="hdr ui" style="left:0px;top:174px;width:721px;height:23px;line-height:22px">Spion functie</div><svg style="left:684px;top:179.5px" width="10" height="13" viewBox="0 0 10 13"><path d="M2.500 1.500h5M3.500 1.500v5.500M6.500 1.500v5.500M7.500 1.500v5.500M1 7.500h8M5 7.500V12" fill="none" stroke="#3e6aaa" stroke-width="1.200"/></svg><svg style="left:705px;top:180.0px" width="10" height="10" viewBox="0 0 10 10"><path d="M1 1l8 8M9 1 1 9" stroke="#3e6aaa" stroke-width="1.500"/></svg>
<div class="tb" style="left:0;top:197px;width:721px;height:32px"></div>
<div class="a" style="left:31px;top:199px;width:26px;height:26px;border:1px solid #c2a978;border-color:#d4b88c #a9b6cf #9fb2d4 #a9b6cf;border-radius:2px;background:linear-gradient(#fbc784 0,#fdbd68 40%,#ffd98a 75%,#ffe9a4 100%)"></div>
<div class="a" style="left:59px;top:199px;width:26px;height:26px;border:1px solid #c2a978;border-color:#d4b88c #a9b6cf #9fb2d4 #a9b6cf;border-radius:2px;background:linear-gradient(#fbc784 0,#fdbd68 40%,#ffd98a 75%,#ffe9a4 100%)"></div>
<div class="a" style="left:243px;top:199px;width:27px;height:26px;border:1px solid #c2a978;border-color:#d4b88c #a9b6cf #9fb2d4 #a9b6cf;border-radius:2px;background:linear-gradient(#fbc784 0,#fdbd68 40%,#ffd98a 75%,#ffe9a4 100%)"></div>
<svg style="left:6px;top:202px" width="21" height="21" viewBox="0 0 21 21"><path d="M1 5.500h4L15 14H1Z" fill="#d818c8"/><path d="M1 5.500h4L9 9H1Z" fill="#f040e0"/><path d="M1 14.500h14" stroke="#400040" stroke-width="1.400"/><path d="M4.500 1v19" stroke="#c010b0" stroke-width="1" stroke-dasharray="1.500 1.500"/><path d="M6 4h11" stroke="#d818c8" stroke-width="1" stroke-dasharray="1.500 1.500"/><rect x="3.300" y="3" width="2.600" height="2.600" fill="#fff" stroke="#400040" stroke-width=".8"/><rect x="13.500" y="9.500" width="6" height="10" fill="#f8f020" stroke="#c010b0" stroke-width="1"/><path d="M15 12h3M15 14.500h3M15 17h3" stroke="#806010" stroke-width=".8"/></svg>
<svg style="left:34px;top:202px" width="21" height="21" viewBox="0 0 21 21"><path d="M1 2v12.500h19C10 13 4 9 1 2Z" fill="#d818c8"/><path d="M1 2v6l9 6.500h10C10 13 4 9 1 2Z" fill="#f050e0" opacity=".5"/><path d="M1 14.500h19" stroke="#400040" stroke-width="1.400"/><path d="M7 1v17M14 1v17" stroke="#c010b0" stroke-width="1" stroke-dasharray="1.500 1.500"/><path d="M3 18.500h14M3 16.500v4M17 16.500v4" stroke="#c03010" stroke-width="1"/></svg>
<svg style="left:62px;top:203px" width="21" height="21" viewBox="0 0 21 21"><path d="M3 6v6.500M9.500 6v6.500M16 6v6.500" stroke="#111" stroke-width="1.500"/><path d="M3 6.700h13" stroke="#111" stroke-width="1.500" stroke-dasharray="1.500 1.800"/><path d="M5.500 6v3M7.500 6v3M12 6v3M14 6v3" stroke="#111" stroke-width="1"/></svg>
<svg style="left:99px;top:203px" width="21" height="21" viewBox="0 0 21 21"><path d="M5 7 7 .5h8L17 7Z" fill="#fff" stroke="#7a8290" stroke-width="1"/><path d="M7.500 3h6M7 5h7.500" stroke="#b0b6c0" stroke-width=".8"/><path d="M1 8.500 4 6.500h13l2.500 2v6H1Z" fill="#c8ced8" stroke="#6a7280" stroke-width="1"/><path d="M1 14.500h18.500v3H1Z" fill="#e8ecf2" stroke="#6a7280" stroke-width="1"/><rect x="13" y="10" width="3" height="3" fill="#28c838"/></svg>
<svg style="left:127px;top:203px" width="21" height="21" viewBox="0 0 21 21"><path d="M1.500 .5h8L13.500 4.500V17h-12Z" fill="#fff" stroke="#6a7280" stroke-width="1"/><path d="M9.500 .5V4.500h4" fill="#8a94a8" stroke="#6a7280"/><circle cx="10" cy="10.500" r="4" fill="#e4eaf4" stroke="#8a94a8" stroke-width="1.200"/><circle cx="9" cy="9.500" r="1.500" fill="#fff"/><path d="M13 13.500 17.500 18" stroke="#c08030" stroke-width="2.600"/></svg>
<svg style="left:163px;top:202px" width="21" height="21" viewBox="0 0 21 21"><rect x="1" y="11" width="18" height="6" fill="#e010d0"/><rect x="1" y="11" width="18" height="2.500" fill="#f040e0"/><path d="M1 17.500h18" stroke="#300030" stroke-width="1.600"/><text x="7" y="8" font-family="Liberation Sans,sans-serif" font-weight="bold" font-size="8.500" fill="#2020e8">N<tspan font-size="6" dy="1.500">x</tspan></text></svg>
<svg style="left:191px;top:202px" width="21" height="21" viewBox="0 0 21 21"><path d="M1 1v8h10Z" fill="#1818f0"/><path d="M9 9.500h10V18Z" fill="#2828f8"/><path d="M1 9.500h18" stroke="#101040" stroke-width="1.600"/><text x="9" y="7" font-family="Liberation Sans,sans-serif" font-weight="bold" font-size="8.500" fill="#2020e8">V<tspan font-size="6" dy="1.500">z</tspan></text></svg>
<svg style="left:218px;top:202px" width="21" height="21" viewBox="0 0 21 21"><path d="M1 5v12h18Z" fill="#e010d0"/><path d="M1 5v6l10 6h8Z" fill="#f050e0" opacity=".5"/><path d="M1 17.500h18" stroke="#300030" stroke-width="1.600"/><text x="7" y="7.5" font-family="Liberation Sans,sans-serif" font-weight="bold" font-size="8.500" fill="#2020e8">M<tspan font-size="6" dy="1.500">y</tspan></text></svg>
<svg style="left:246px;top:203px" width="21" height="21" viewBox="0 0 21 21"><rect x="1" y="5" width="18" height="2.200" fill="#4a78b8"/><rect x="8.500" y="4.300" width="3" height="3.600" fill="#f0c040" stroke="#4a78b8" stroke-width=".6"/><path d="M2.500 9.500c4 6 11 6 15 0" fill="none" stroke="#e81010" stroke-width="1.200"/><circle cx="10" cy="14.300" r="1.700" fill="#fff" stroke="#e81010" stroke-width="1.200"/></svg>
<svg style="left:274px;top:203px" width="21" height="21" viewBox="0 0 21 21"><path d="M1 3c2 1 2 2 4 2h10c2 0 2-1 4-2v14c-2-1-2-2-4-2H5c-2 0-2 1-4 2Z" fill="#9aa0a8"/><path d="M0 10h20" stroke="#9aa0a8" stroke-width="1"/><path d="M6 5v10M10 5v10M14 5v10" stroke="#b8bec6" stroke-width=".8"/></svg>
<svg style="left:313px;top:202px" width="21" height="21" viewBox="0 0 21 21"><rect x=".5" y=".5" width="20" height="19" rx="3" fill="#1c7ae0" stroke="#0c58b8"/><rect x="2" y="2" width="17" height="8" rx="2" fill="#58a8f8" opacity=".6"/><path d="M6 6h7l2 5-3 5H6Z" fill="#f0a030" stroke="#804010" stroke-width=".8"/><rect x="4" y="4" width="4" height="4" fill="#f8e020" stroke="#705010" stroke-width=".6"/><rect x="11" y="11" width="5" height="5" fill="#38b838" stroke="#105010" stroke-width=".6"/><circle cx="9" cy="13" r="2" fill="#e83030"/></svg>
<div class="a" style="left:89px;top:204px;width:1px;height:19px;background:#8eaede;box-shadow:1px 0 0 #eef5fe"></div>
<div class="a" style="left:154px;top:204px;width:1px;height:19px;background:#8eaede;box-shadow:1px 0 0 #eef5fe"></div>
<div class="a" style="left:302px;top:204px;width:1px;height:19px;background:#8eaede;box-shadow:1px 0 0 #eef5fe"></div>
<div class="a" style="left:356px;top:204px;width:1px;height:19px;background:#8eaede;box-shadow:1px 0 0 #eef5fe"></div>
<div class="dd" style="left:341px;top:211px"></div>
<div class="combo" style="left:363px;top:201px;width:108px">B.G.<b></b></div>
<div class="combo" style="left:476px;top:201px;width:145px">B.G.1: Permanent<b></b></div>
<div class="a" style="left:1.3px;top:229px;width:719.7px;height:376.4px;background:#fff"></div>
<div class="a" style="left:47.2px;top:229px;width:627.8px;height:373.6px;background:#f8f8f8"></div>
<svg style="left:0;top:229px" width="722" height="376" viewBox="0 229 722 376"><path d="M47.9 232.3V249.8M60.5 232.3V241M74.2 232.3V241M85.6 232.3V241M99.3 232.3V241M110.7 232.3V246M124.4 232.3V241M135.8 232.3V241M149.5 232.3V241M160.9 232.3V241M174.6 232.3V249.8M186.0 232.3V241M199.7 232.3V241M211.1 232.3V241M224.8 232.3V241M236.2 232.3V246M249.9 232.3V241M261.3 232.3V241M275.1 232.3V241M286.4 232.3V241M300.2 232.3V249.8M311.5 232.3V241M325.3 232.3V241M336.6 232.3V241M350.4 232.3V241M361.7 232.3V246M375.5 232.3V241M386.8 232.3V241M400.6 232.3V241M411.9 232.3V241M425.7 232.3V249.8M437.0 232.3V241M450.8 232.3V241M462.1 232.3V241M475.9 232.3V241M487.3 232.3V246M501.0 232.3V241M512.4 232.3V241M526.1 232.3V241M537.5 232.3V241M551.2 232.3V249.8M562.6 232.3V241M576.3 232.3V241M587.7 232.3V241M601.4 232.3V241M612.8 232.3V246M626.5 232.3V241M637.9 232.3V241M651.6 232.3V241M663.0 232.3V241M675.4 232.3V249.8" stroke="#1c1c1c" stroke-width="1.550" fill="none"/><rect x="37" y="418.300" width="23.500" height="10.800" fill="none" stroke="#1a1aff" stroke-width="1.600"/><path d="M41 430.300l-3.500 3.500M47.500 430.300l-3.500 3.500M53 430.300l-3.500 3.500M59 430.300l-3.500 3.500" stroke="#1a1aff" stroke-width="1.400"/><path d="M56.0 417.5C60.8 417.8 75.3 418.2 85.0 419.5C94.7 420.8 99.7 422.1 114.0 425.0C128.3 427.9 152.0 432.2 171.0 437.0C190.0 441.8 210.8 448.6 228.0 454.0C245.2 459.4 255.0 462.8 274.0 469.5C293.0 476.2 318.0 485.5 342.0 494.0C366.0 502.5 392.7 512.8 418.0 520.7C443.3 528.6 468.7 535.8 494.0 541.6C519.3 547.4 547.8 552.4 570.0 555.7C592.2 559.1 609.3 560.2 627.0 561.7C644.7 563.2 667.8 564.0 676.0 564.4" fill="none" stroke="#7a7a7a" stroke-width="1.300"/><path d="M48 417.600h626" stroke="#000" stroke-width="2.700"/><rect x="43" y="412.900" width="10" height="9" fill="#00f0f0" stroke="#111" stroke-width="1.400"/><rect x="669" y="412.900" width="10" height="9" fill="#00f0f0" stroke="#111" stroke-width="1.400"/><text x="246" y="414" font-family="Liberation Sans,sans-serif" font-size="16.500" fill="#111">S1</text><text x="387.500" y="537" font-family="Liberation Sans,sans-serif" font-size="15.500" fill="#111">0.000042*</text><text x="641.500" y="579" font-family="Liberation Sans,sans-serif" font-size="15.700" fill="#3a3af0">0.000058</text></svg>
<div class="a" style="left:0;top:605.4px;width:721px;height:7.2px;background:linear-gradient(#b4cdea 0,#bcd2ec 1.8px,#d4e4f5 2.4px,#d4e4f5 5.6px,#bfd4ed 6.2px)"></div>
<div class="a" style="left:3px;top:614px;width:602px;height:153px;background:#fff"></div>
<div class="gh ms" style="left:3px;top:614px;width:27px;height:21.5px"></div>
<div class="gh ms" style="left:30px;top:614px;width:75px;height:21.5px">Staaf</div>
<div class="gh ms" style="left:105px;top:614px;width:125px;height:21.5px">Omschr.</div>
<div class="gh ms" style="left:230px;top:614px;width:94px;height:21.5px">Positie</div>
<div class="gh ms" style="left:324px;top:614px;width:94px;height:21.5px">Nx</div>
<div class="gh ms" style="left:418px;top:614px;width:93px;height:21.5px">Vz</div>
<div class="gh ms" style="left:511px;top:614px;width:94px;height:21.5px">My</div>
<div class="gh" style="left:3px;top:635.5px;width:27px;height:19.0px"></div>
<div class="gc ms r" style="left:105px;top:635.5px;width:125px;height:19.0px;background:#fff;color:#000">(Begin)</div>
<div class="gc ms r" style="left:230px;top:635.5px;width:94px;height:19.0px;background:#fff;color:#1a1af0">0.000</div>
<div class="gc ms r" style="left:324px;top:635.5px;width:94px;height:19.0px;background:#fff;color:#000">-20.00</div>
<div class="gc ms r" style="left:418px;top:635.5px;width:93px;height:19.0px;background:#fff;color:#000">93.38</div>
<div class="gc ms r" style="left:511px;top:635.5px;width:94px;height:19.0px;background:#fff;color:#000">-150.40</div>
<div class="gh" style="left:3px;top:654.5px;width:27px;height:18.899999999999977px"></div>
<div class="gc ms r" style="left:105px;top:654.5px;width:125px;height:18.899999999999977px;background:#e4e4e4;color:#000">Nx (Begin/Max)</div>
<div class="gc ms r" style="left:230px;top:654.5px;width:94px;height:18.899999999999977px;background:#e4e4e4;color:#1a1af0">0.000</div>
<div class="gc ms r" style="left:324px;top:654.5px;width:94px;height:18.899999999999977px;background:#e4e4e4;color:#000">-20.00</div>
<div class="gc ms r" style="left:418px;top:654.5px;width:93px;height:18.899999999999977px;background:#e4e4e4;color:#000">93.38</div>
<div class="gc ms r" style="left:511px;top:654.5px;width:94px;height:18.899999999999977px;background:#e4e4e4;color:#000">-150.40</div>
<div class="gh" style="left:3px;top:673.4px;width:27px;height:18.600000000000023px"></div>
<div class="gc ms r" style="left:105px;top:673.4px;width:125px;height:18.600000000000023px;background:#fff;color:#000">Vz (Begin/Max)</div>
<div class="gc ms r" style="left:230px;top:673.4px;width:94px;height:18.600000000000023px;background:#fff;color:#1a1af0">0.000</div>
<div class="gc ms r" style="left:324px;top:673.4px;width:94px;height:18.600000000000023px;background:#fff;color:#000">-20.00</div>
<div class="gc ms r" style="left:418px;top:673.4px;width:93px;height:18.600000000000023px;background:#fff;color:#000">93.38</div>
<div class="gc ms r" style="left:511px;top:673.4px;width:94px;height:18.600000000000023px;background:#fff;color:#000">-150.40</div>
<div class="gh" style="left:3px;top:692px;width:27px;height:18.799999999999955px"></div>
<div class="gc ms r" style="left:105px;top:692px;width:125px;height:18.799999999999955px;background:#e4e4e4;color:#000">My (Begin/Max)</div>
<div class="gc ms r" style="left:230px;top:692px;width:94px;height:18.799999999999955px;background:#e4e4e4;color:#1a1af0">0.000</div>
<div class="gc ms r" style="left:324px;top:692px;width:94px;height:18.799999999999955px;background:#e4e4e4;color:#000">-20.00</div>
<div class="gc ms r" style="left:418px;top:692px;width:93px;height:18.799999999999955px;background:#e4e4e4;color:#000">93.38</div>
<div class="gc ms r" style="left:511px;top:692px;width:94px;height:18.799999999999955px;background:#e4e4e4;color:#000">-150.40</div>
<div class="gh" style="left:3px;top:710.8px;width:27px;height:18.800000000000068px"></div>
<div class="gc ms r" style="left:105px;top:710.8px;width:125px;height:18.800000000000068px;background:#fff;color:#000">(Eind)</div>
<div class="gc ms r" style="left:230px;top:710.8px;width:94px;height:18.800000000000068px;background:#fff;color:#1a1af0">5.000</div>
<div class="gc ms r" style="left:324px;top:710.8px;width:94px;height:18.800000000000068px;background:#fff;color:#000">-20.00</div>
<div class="gc ms r" style="left:418px;top:710.8px;width:93px;height:18.800000000000068px;background:#fff;color:#000">-6.62</div>
<div class="gc ms r" style="left:511px;top:710.8px;width:94px;height:18.800000000000068px;background:#fff;color:#000">66.49</div>
<div class="gh" style="left:3px;top:729.6px;width:27px;height:18.899999999999977px"></div>
<div class="gc ms r" style="left:105px;top:729.6px;width:125px;height:18.899999999999977px;background:#e4e4e4;color:#000">Tussenwaarde</div>
<div class="gc ms r" style="left:230px;top:729.6px;width:94px;height:18.899999999999977px;background:#e4e4e4;color:#000">3.000</div>
<div class="gc ms r" style="left:324px;top:729.6px;width:94px;height:18.899999999999977px;background:#e4e4e4;color:#000">-20.00</div>
<div class="gc ms r" style="left:418px;top:729.6px;width:93px;height:18.899999999999977px;background:#e4e4e4;color:#000">33.38</div>
<div class="gc ms r" style="left:511px;top:729.6px;width:94px;height:18.899999999999977px;background:#e4e4e4;color:#000">39.73</div>
<div class="gh" style="left:3px;top:748.5px;width:27px;height:18.700000000000045px"></div>
<div class="gc ms r" style="left:105px;top:748.5px;width:125px;height:18.700000000000045px;background:#fff;color:#000">Invoer pos:</div>
<div class="gc ms r" style="left:230px;top:748.5px;width:94px;height:18.700000000000045px;background:#fff;color:#000"></div>
<div class="gc ms r" style="left:324px;top:748.5px;width:94px;height:18.700000000000045px;background:#fff;color:#000"></div>
<div class="gc ms r" style="left:418px;top:748.5px;width:93px;height:18.700000000000045px;background:#fff;color:#000"></div>
<div class="gc ms r" style="left:511px;top:748.5px;width:94px;height:18.700000000000045px;background:#fff;color:#000"></div>
<div class="gc ms c" style="left:30px;top:635.5px;width:75px;height:131.700px;background:#fff;border-bottom:0">S1</div>
<svg style="left:12px;top:750.5px" width="9" height="15" viewBox="0 0 9 15"><path d="M0 0 8 7.500 0 15Z" fill="#000"/></svg>
<div class="tabstrip" style="left:0;top:939px;width:721px;height:27px"></div>
<div class="a" style="left:0;top:197px;width:1.3px;height:769px;background:#a4bee2"></div>
<div class="tab ui" style="left:8px;top:939px;width:66px;padding:0 4px;line-height:21px">Krachten</div>
<div class="a ui" style="left:86px;top:942.5px;line-height:16px;letter-spacing:.92px">Verpl/Doorb</div>
<svg style="left:679px;top:945px" width="32" height="12" viewBox="0 0 32 12"><path d="M7.500 1.500v9L2 6ZM24.500 1.500v9L30 6Z" fill="none" stroke="#333" stroke-width="1"/></svg>
<div class="a" style="left:0;top:966px;width:723px;height:24px;border:1px solid #3d5f9a;border-top-width:2px;border-radius:0 0 6px 6px;background:linear-gradient(#e6f0fd 0,#c8dcf8 35%,#b4cff5 60%,#c0d8f8 100%)"></div>
<div class="a" style="left:197px;top:970px;width:1px;height:18px;background:#8eaede;box-shadow:1px 0 0 #eef5fe"></div>
<div class="a" style="left:392px;top:970px;width:1px;height:18px;background:#8eaede;box-shadow:1px 0 0 #eef5fe"></div>
<div class="a ui" style="left:8px;top:972px;color:#a0a0a0;line-height:16px;letter-spacing:.05px">B.G.1</div><div class="a ui" style="left:203px;top:972px;color:#a0a0a0;line-height:16px;letter-spacing:0">S1</div>
<!-- center -->
<div class="tb" style="left:727px;top:172.5px;width:720px;height:28.5px"></div>
<svg style="left:736px;top:178px" width="21" height="20" viewBox="0 0 21 20"><rect x="1" y="1" width="4" height="7" fill="#f8e820" stroke="#2a4a88" stroke-width="1"/><rect x="12" y="1.500" width="7" height="6" fill="#1888f0" stroke="#2a4a88" stroke-width="1"/><rect x="8" y="6" width="6" height="5" fill="#fff" stroke="#2a4a88" stroke-width="1"/><rect x="4.500" y="11" width="6.500" height="6.500" fill="#f01818" stroke="#2a4a88" stroke-width="1"/><rect x="16" y="11" width="3.500" height="7" fill="#28b838" stroke="#2a4a88" stroke-width="1"/></svg>
<div class="dd" style="left:764px;top:185px"></div>
<svg style="left:780px;top:177px" width="21" height="21" viewBox="0 0 21 21"><path d="M3 17 15 3" stroke="#f01818" stroke-width="2.600"/><rect x="14.500" y="1" width="3.500" height="3.500" fill="#d8e8f8" stroke="#2a5aa8" stroke-width="1"/><rect x="1.500" y="15.500" width="3.500" height="3.500" fill="#f01818" stroke="#a01010" stroke-width=".8"/><path d="M12 11h6l-2 1.800 3 3.500-1.800 1.500-3-3.500L12 16.500Z" fill="#111"/></svg>
<div class="dd" style="left:808px;top:185px"></div>
<div class="a" style="left:821px;top:178px;width:1px;height:18px;background:#8eaede;box-shadow:1px 0 0 #eef5fe"></div>
<div class="combo" style="left:829px;top:176px;width:108px">B.G.<b></b></div>
<div class="combo" style="left:942px;top:176px;width:145px">B.G.1: Permanent<b></b></div>
<div class="a" style="left:1094px;top:178px;width:1px;height:18px;background:#8eaede;box-shadow:1px 0 0 #eef5fe"></div>
<div class="a" style="left:1100px;top:174px;width:27px;height:26px;border:1px solid #c2a978;border-color:#d4b88c #a9b6cf #9fb2d4 #a9b6cf;border-radius:2px;background:linear-gradient(#fbc784 0,#fdbd68 40%,#ffd98a 75%,#ffe9a4 100%)"></div>
<svg style="left:1104px;top:178px" width="20" height="19" viewBox="0 0 20 19"><circle cx="7" cy="10" r="4.300" fill="#e6ecf6" stroke="#8a94a8" stroke-width="1.200"/><circle cx="6" cy="9" r="1.700" fill="#fff"/><path d="M10 13.500 13.500 17.500" stroke="#c09038" stroke-width="2.600"/><path d="M3 8V3h13v7h-4" fill="none" stroke="#4a5a88" stroke-width="1.200" stroke-dasharray="2 1.300"/></svg>
<svg style="left:1131px;top:177px" width="20" height="19" viewBox="0 0 20 19"><circle cx="7" cy="10" r="4.300" fill="#e6ecf6" stroke="#8a94a8" stroke-width="1.200"/><circle cx="6" cy="9" r="1.700" fill="#fff"/><path d="M10 13.500 13.500 17.500" stroke="#c09038" stroke-width="2.600"/><path d="M2 5V2h3M12 2h3v3M7.500 1v7M4 4.500h7M6 2.500 7.500 1 9 2.500M5.500 3 4 4.500 5.500 6M9.500 3 11 4.500 9.500 6" fill="none" stroke="#3a4a68" stroke-width="1"/></svg>
<svg style="left:1158px;top:177px" width="20" height="19" viewBox="0 0 20 19"><circle cx="7" cy="10" r="4.300" fill="#e6ecf6" stroke="#8a94a8" stroke-width="1.200"/><circle cx="6" cy="9" r="1.700" fill="#fff"/><path d="M10 13.500 13.500 17.500" stroke="#c09038" stroke-width="2.600"/><path d="M12 4h6M15 1v6M12 9h6" stroke="#3a4a68" stroke-width="1.300"/></svg>
<svg style="left:1185px;top:177px" width="20" height="19" viewBox="0 0 20 19"><circle cx="7" cy="10" r="4.300" fill="#e6ecf6" stroke="#8a94a8" stroke-width="1.200"/><circle cx="6" cy="9" r="1.700" fill="#fff"/><path d="M10 13.500 13.500 17.500" stroke="#c09038" stroke-width="2.600"/><path d="M12 4.500h7M12 4.500l3-3M12 4.500l3 3" fill="none" stroke="#3a4a68" stroke-width="1.400"/></svg>
<div class="combo" style="left:1212px;top:176px;width:89px">107%<b></b></div>
<svg style="left:1306px;top:176px" width="23" height="21" viewBox="0 0 21 20"><path d="M3.500 11 1.800 8.300c-.8-1.400.9-2.300 1.800-1l1.900 2.400V3.600c0-1.500 1.900-1.500 1.900 0v4.600V2.300c0-1.500 1.900-1.500 1.900 0v5.900V3.100c0-1.500 1.900-1.500 1.900 0v5.400V5c0-1.400 1.800-1.400 1.800 0v7.500c0 3.500-2 6.500-5 6.500h-.8c-2.200 0-3.200-1.500-5.500-5Z" fill="#14b4b8" stroke="#0a8a90" stroke-width=".7"/><path d="M7.400 8.200v3M9.300 8.200v3M11.200 8.500v2.700" stroke="#0a8a90" stroke-width=".7"/><path d="M17.500 .500v6.500M14.200 3.800h6.600M16.200 1.800 17.500 .500l1.300 1.300M16.200 5.800 17.500 7l1.300-1.200M15.500 2.500 14.200 3.800l1.300 1.300M19.500 2.500l1.300 1.300-1.300 1.300" fill="none" stroke="#2a3a68" stroke-width=".9"/></svg>
<div class="a" style="left:1336px;top:178px;width:1px;height:18px;background:#8eaede;box-shadow:1px 0 0 #eef5fe"></div>
<svg style="left:1345px;top:179px" width="20" height="17" viewBox="0 0 21 19"><path d="M3.500 4.500h14v7.500h-14zM8.200 4.500v7.500M12.800 4.500v7.500" fill="none" stroke="#109020" stroke-width="1.500"/><path d="M1 15.500h19" stroke="#2a5ab0" stroke-width="1.500"/><rect x="0" y="14" width="3" height="3" fill="#fff" stroke="#2a5ab0" stroke-width=".9"/><rect x="18" y="14" width="3" height="3" fill="#fff" stroke="#2a5ab0" stroke-width=".9"/></svg>
<svg style="left:1372px;top:178px" width="20" height="18" viewBox="0 0 21 19"><path d="M4 2v6M1 5h6" stroke="#109020" stroke-width="1.500"/><path d="M12.500 1v10" stroke="#109020" stroke-width="1.700"/><path d="M9 9l3.500 5L16 9Z" fill="#109020"/><path d="M1 16h18" stroke="#3a6ab0" stroke-width="1.500"/><rect x="17" y="14.300" width="3.400" height="3.400" fill="#2a5a98"/><rect x="0" y="14.300" width="3.400" height="3.400" fill="#2a5a98"/></svg>
<div class="a" style="left:1396px;top:174px;width:28px;height:26px;border:1px solid #c2a978;border-color:#d4b88c #a9b6cf #9fb2d4 #a9b6cf;border-radius:2px;background:linear-gradient(#fbc784 0,#fdbd68 40%,#ffd98a 75%,#ffe9a4 100%)"></div>
<svg style="left:1399px;top:177px" width="22" height="20" viewBox="0 0 21 20"><path d="M2 11.500 10.500 2.500 19 12" fill="none" stroke="#f82020" stroke-width="1.300"/><path d="M3 14.500l3-2 1.500 0 2.500-2.500 2.500 2 1.500 0 2.500 2.500" fill="none" stroke="#1818e8" stroke-width="1.500" stroke-dasharray="2 1"/><path d="M3 17.500h15" stroke="#2a5a88" stroke-width="1.400"/></svg>
<div class="a" style="left:1428px;top:179px;width:1px;height:17px;background:#8eaede;box-shadow:1px 0 0 #eef5fe"></div>
<div class="a" style="left:727.8px;top:201.3px;width:718.4px;height:578.9px;background:#bfdbff;border-left:2.2px solid #6e6e6e;border-top:2.6px solid #7a7a7a;border-right:1.7px solid #fff;border-bottom:2.4px solid #fbfdff"></div><div class="a" style="left:730px;top:203.9px;width:714.5px;height:548.8px;background:#f0f0f0"></div>
<div class="a" style="left:730px;top:204px;width:694px;height:528px;background:#fff"></div>
<div class="a" style="left:1433px;top:390px;width:2px;height:155px;background:#6a6a6a"></div>
<div class="a" style="left:963px;top:741px;width:227px;height:2px;background:#6a6a6a"></div>
<svg style="left:730px;top:204px" width="694" height="528" viewBox="730 204 694 528"><path d="M1101.0 603.3C1105.7 603.0 1118.5 603.2 1129.0 601.6C1139.5 600.0 1153.3 596.4 1163.8 593.5C1174.2 590.6 1180.1 589.7 1191.7 584.1C1203.3 578.5 1221.7 567.3 1233.6 560.0C1245.5 552.7 1252.6 547.4 1263.0 540.5C1273.4 533.6 1290.5 522.2 1296.0 518.5" fill="none" stroke="#7a7a7a" stroke-width="1.300"/><path d="M1207.4 420.1C1209.7 422.4 1216.6 429.4 1221.0 434.0C1225.4 438.6 1228.9 443.3 1233.6 448.0C1238.3 452.7 1244.7 457.6 1249.4 462.4C1254.1 467.1 1257.5 471.8 1261.9 476.5C1266.3 481.2 1272.1 486.7 1276.0 490.6C1279.9 494.5 1282.2 496.0 1285.5 500.0C1288.8 504.0 1294.2 512.1 1296.0 514.5" fill="none" stroke="#7a7a7a" stroke-width="1.300"/><path d="M833 516.700h267" stroke="#ff0000" stroke-width="3.200" stroke-linecap="round"/><path d="M1100 516.700h197.500M1297.300 418v100" fill="none" stroke="#000" stroke-width="2.800"/><path d="M866.0 517.3C867.4 517.4 869.4 516.8 874.2 517.8C879.0 518.8 888.0 520.8 895.0 523.0C902.0 525.2 909.0 527.8 916.0 531.0C923.0 534.2 929.4 537.7 937.0 542.2C944.6 546.7 952.7 553.3 961.4 558.0C970.1 562.7 977.7 565.0 989.3 570.2C1000.9 575.4 1016.7 584.2 1031.2 589.3C1045.8 594.3 1065.0 598.2 1076.6 600.5C1088.2 602.8 1096.9 602.8 1101.0 603.3" fill="none" stroke="#ff1010" stroke-width="1.300"/><path d="M855.600 492.500l1.800 2v44.500l-1.800 2-1.800-2v-44.500Z" fill="#1010ff"/><rect x="844.600" y="517" width="22.200" height="10.800" fill="none" stroke="#1a1aff" stroke-width="1.400"/><path d="M849 528.500l-3 4.500M854 528.500l-3 4.500M860.500 528.500l-3 4.500M865.500 528.500l-3 4.500" stroke="#1a1aff" stroke-width="1.300"/><g fill="none" stroke="#2a2aff" stroke-width="1.200"><path d="M1298 517.500l-11 11h22.500Z"/><path d="M1287 539h23"/><path d="M1290 530.500l2.800 3.200-2.800 3.200-2.800-3.200ZM1306.500 530.500l2.800 3.200-2.800 3.200-2.800-3.200Z"/><path d="M1292 539.500l-3 5.500M1297.500 539.500l-3 5.500M1303 539.500l-3 5.500M1308.500 539.500l-3 5.500"/></g><rect x="850.3" y="511.3" width="9.400" height="9.400" fill="#00f0f0" stroke="#111" stroke-width="1.400"/><rect x="1095.8" y="511.8" width="9.400" height="9.400" fill="#00f0f0" stroke="#111" stroke-width="1.400"/><rect x="1292.5" y="511.8" width="9.400" height="9.400" fill="#00f0f0" stroke="#111" stroke-width="1.400"/><rect x="1292.3999999999999" y="413.3" width="9.400" height="9.400" fill="#00f0f0" stroke="#111" stroke-width="1.400"/><text x="825" y="513" font-family="Liberation Sans,sans-serif" font-size="16.500" fill="#111">K1</text><text x="1069" y="513" font-family="Liberation Sans,sans-serif" font-size="16.500" fill="#111">K2</text><text x="1267" y="513" font-family="Liberation Sans,sans-serif" font-size="16.500" fill="#111">K3</text><text x="1267" y="414" font-family="Liberation Sans,sans-serif" font-size="16.500" fill="#111">K4</text><text x="1169" y="435" font-family="Liberation Sans,sans-serif" font-size="15.900" fill="#f02020">-0.000061</text><text x="1067.500" y="620" font-family="Liberation Sans,sans-serif" font-size="15.900" fill="#3a3af0">0.000058</text><path d="M821 640h30" stroke="#f01010" stroke-width="2"/><path d="M848 634.500l20 5.500-20 5.500Z" fill="#e81010" stroke="#a00000" stroke-width="1"/><path d="M821 640v30" stroke="#1818e8" stroke-width="2"/><path d="M816 667l5.500 20 5.500-20Z" fill="#1818e8" stroke="#0000a0" stroke-width="1"/><circle cx="821" cy="640" r="3.800" fill="#000"/><text x="868.500" y="659.500" font-family="Liberation Sans,sans-serif" font-size="20" fill="#000">X</text><text x="822" y="706" font-family="Liberation Sans,sans-serif" font-size="20" fill="#000">Z</text></svg>


<div class="tab ui" style="left:734.5px;top:752.7px;width:155px;height:21px;line-height:21.5px;padding:0 0 0 5.5px;letter-spacing:.28px">Constructieafbeelding</div>
<div class="a ui" style="left:900px;top:756px;line-height:16px">Virtueel model</div>
<svg style="left:1402px;top:760px" width="32" height="12" viewBox="0 0 32 12"><path d="M7.500 1.500v9L2 6ZM24.500 1.500v9L30 6Z" fill="none" stroke="#333" stroke-width="1"/></svg>
<!-- right -->
<div class="a" style="left:1451.5px;top:174px;width:467px;height:577.3px;background:#f0f0f0"></div>
<div class="hdr ui" style="left:1451.5px;top:174px;width:467px;height:23px;line-height:22px">Weergave-instellingen</div><svg style="left:1882px;top:179.5px" width="10" height="13" viewBox="0 0 10 13"><path d="M2.500 1.500h5M3.500 1.500v5.500M6.500 1.500v5.500M7.500 1.500v5.500M1 7.500h8M5 7.500V12" fill="none" stroke="#3e6aaa" stroke-width="1.200"/></svg><svg style="left:1902px;top:180.0px" width="10" height="10" viewBox="0 0 10 10"><path d="M1 1l8 8M9 1 1 9" stroke="#3e6aaa" stroke-width="1.500"/></svg>
<div class="a" style="left:1459px;top:205px;width:454px;height:503px;border:1px solid #828790;background:#fff"></div>
<div class="a" style="left:1890px;top:208px;width:21px;height:497px;background:#f0f0f0"></div>
<div class="a" style="left:1899px;top:229px;width:2px;height:352px;background:#6a6a6a"></div>
<div class="a" style="left:1460px;top:206px;width:430px;height:501px;overflow:hidden"><div class="a" style="left:39px;top:18px;width:1px;height:480px;background-image:linear-gradient(to bottom,#9a9a9a 50%,transparent 50%);background-size:1px 2px"></div><div class="a" style="left:63px;top:58px;width:1px;height:440px;background-image:linear-gradient(to bottom,#9a9a9a 50%,transparent 50%);background-size:1px 2px"></div><div class="a" style="left:21px;top:11px;width:8px;height:1px;background-image:linear-gradient(to right,#9a9a9a 50%,transparent 50%);background-size:2px 1px"></div><div class="a" style="left:10px;top:6.5px;width:11px;height:11px;border:1px solid #919191;border-radius:2px;background:linear-gradient(#fff,#e4e4e4)"></div><div class="a" style="left:13px;top:11.5px;width:5px;height:1px;background:#4a5ab8"></div><svg style="left:29px;top:1px" width="20" height="20" viewBox="0 0 20 20"><rect x="6" y="1" width="13" height="14" rx="2" fill="#d4e2f4" stroke="#a8b8d8" stroke-width="1"/><rect x="4" y="3" width="13" height="14" rx="2" fill="#c8daf0" stroke="#98a8d0" stroke-width="1"/><rect x="1.500" y="5.500" width="13" height="14" rx="2.500" fill="#b4cceb" stroke="#4a5ae0" stroke-width="1.500"/><rect x="3.500" y="7.500" width="9" height="10" rx="1" fill="#c4d8f0"/></svg><div class="tr" style="left:55px;top:1px"><b style="font-size:15px;letter-spacing:-.15px">Laag</b></div><div class="a" style="left:45px;top:31px;width:7px;height:1px;background-image:linear-gradient(to right,#9a9a9a 50%,transparent 50%);background-size:2px 1px"></div><div class="a" style="left:34px;top:26.5px;width:11px;height:11px;border:1px solid #919191;border-radius:2px;background:linear-gradient(#fff,#e4e4e4)"></div><div class="a" style="left:37px;top:31.5px;width:5px;height:1px;background:#4a5ab8"></div><div class="a" style="left:39px;top:29.5px;width:1px;height:5px;background:#4a5ab8"></div><svg style="left:52px;top:21px" width="20" height="20" viewBox="0 0 20 20"><rect x=".5" y=".5" width="19" height="18" fill="#fff" stroke="#6a9ad8" stroke-width="1"/><path d="M3 16V9L7 4.500h11V16M3 10h15M10 4.500V16" fill="none" stroke="#ffb41c" stroke-width="1.350"/><path d="M1.500 18.500 3 16l1.500 2.500ZM8.500 18.500 10 16l1.500 2.500ZM16.500 18.500 18 16l1.500 2.500Z" fill="#f01818"/></svg><div class="tr" style="left:79px;top:21px"><b style="font-size:15px;letter-spacing:-.15px">Constructie afbeelding</b></div><div class="a" style="left:45px;top:51px;width:7px;height:1px;background-image:linear-gradient(to right,#9a9a9a 50%,transparent 50%);background-size:2px 1px"></div><div class="a" style="left:34px;top:46.5px;width:11px;height:11px;border:1px solid #919191;border-radius:2px;background:linear-gradient(#fff,#e4e4e4)"></div><div class="a" style="left:37px;top:51.5px;width:5px;height:1px;background:#4a5ab8"></div><svg style="left:52px;top:41px" width="20" height="20" viewBox="0 0 20 20"><path d="M4 17V10L8 6h10v11M4 11h14M11 6v11" fill="none" stroke="#ffb41c" stroke-width="1.350"/><path d="M2.500 20 4 17.500 5.500 20ZM9.500 20 11 17.500 12.500 20ZM16.500 20 18 17.500 19.500 20Z" fill="#f01818"/><path d="M4 0v5M10 1h8M11 1v3M14 1v3M17 1v3" stroke="#109020" stroke-width="1.300"/><path d="M2 4l2 3 2-3Z" fill="#109020"/></svg><div class="tr" style="left:79px;top:41px"><b style="font-size:15px;letter-spacing:-.15px">Constructie</b></div><div class="a" style="left:69px;top:71px;width:7px;height:1px;background-image:linear-gradient(to right,#9a9a9a 50%,transparent 50%);background-size:2px 1px"></div><div class="a" style="left:58px;top:66.5px;width:11px;height:11px;border:1px solid #919191;border-radius:2px;background:linear-gradient(#fff,#e4e4e4)"></div><div class="a" style="left:61px;top:71.5px;width:5px;height:1px;background:#4a5ab8"></div><div class="a" style="left:63px;top:69.5px;width:1px;height:5px;background:#4a5ab8"></div><svg style="left:76px;top:61px" width="20" height="20" viewBox="0 0 20 20"><path d="M8 0v19M0 7.500h19" stroke="#2a5ab8" stroke-width="1.300"/><circle cx="8" cy="7.500" r="2" fill="#f01818"/><path d="M10.500 10h6l-2 1.800 3 3.500-1.800 1.500-3-3.500-2.200 2Z" fill="#333"/></svg><div class="tr" style="left:103px;top:61px"><b style="font-size:15px;letter-spacing:-.15px">Knoop</b></div><div class="a" style="left:69px;top:91px;width:7px;height:1px;background-image:linear-gradient(to right,#9a9a9a 50%,transparent 50%);background-size:2px 1px"></div><div class="a" style="left:58px;top:86.5px;width:11px;height:11px;border:1px solid #919191;border-radius:2px;background:linear-gradient(#fff,#e4e4e4)"></div><div class="a" style="left:61px;top:91.5px;width:5px;height:1px;background:#4a5ab8"></div><div class="a" style="left:63px;top:89.5px;width:1px;height:5px;background:#4a5ab8"></div><svg style="left:76px;top:81px" width="20" height="20" viewBox="0 0 20 20"><path d="M3 17 15 3" stroke="#f01818" stroke-width="2.600"/><rect x="14.500" y="1" width="3.500" height="3.500" fill="#d8e8f8" stroke="#2a5aa8" stroke-width="1"/><rect x="1.500" y="15.500" width="3.500" height="3.500" fill="#d8e8f8" stroke="#2a5aa8" stroke-width=".9"/><path d="M11 10.500h6l-2 1.800 3 3.500-1.800 1.500-3-3.500-2.200 2Z" fill="#333"/></svg><div class="tr" style="left:103px;top:81px"><b style="font-size:15px;letter-spacing:-.15px">Staaf</b></div><div class="a" style="left:69px;top:111px;width:7px;height:1px;background-image:linear-gradient(to right,#9a9a9a 50%,transparent 50%);background-size:2px 1px"></div><div class="a" style="left:58px;top:106.5px;width:11px;height:11px;border:1px solid #919191;border-radius:2px;background:linear-gradient(#fff,#e4e4e4)"></div><div class="a" style="left:61px;top:111.5px;width:5px;height:1px;background:#4a5ab8"></div><div class="a" style="left:63px;top:109.5px;width:1px;height:5px;background:#4a5ab8"></div><svg style="left:76px;top:101px" width="20" height="20" viewBox="0 0 20 20"><rect x="1.500" y="1.500" width="7" height="7" fill="#8a8a8a" stroke="#6a6a6a" stroke-width=".7"/><rect x="1.500" y="11" width="7" height="7.500" rx="2.200" fill="#f0a030" stroke="#c07010" stroke-width="1"/><path d="M11.500 2h5.500M11.500 9h5.500M14.200 2v7M12 12h5v6h-5" fill="none" stroke="#11988f" stroke-width="1.400"/></svg><div class="tr" style="left:103px;top:101px"><b style="font-size:15px;letter-spacing:-.15px">Profiel</b></div><div class="a" style="left:69px;top:131px;width:7px;height:1px;background-image:linear-gradient(to right,#9a9a9a 50%,transparent 50%);background-size:2px 1px"></div><div class="a" style="left:58px;top:126.5px;width:11px;height:11px;border:1px solid #919191;border-radius:2px;background:linear-gradient(#fff,#e4e4e4)"></div><div class="a" style="left:61px;top:131.5px;width:5px;height:1px;background:#4a5ab8"></div><div class="a" style="left:63px;top:129.5px;width:1px;height:5px;background:#4a5ab8"></div><svg style="left:76px;top:121px" width="20" height="20" viewBox="0 0 20 20"><circle cx="6.500" cy="10" r="3.800" fill="#fff" stroke="#111" stroke-width="1.300"/><path d="M2 10h6M11 10.500h8" stroke="#111" stroke-width="1.600"/></svg><div class="tr" style="left:103px;top:121px"><b style="font-size:15px;letter-spacing:-.15px">Staafaansluiting</b></div><div class="a" style="left:69px;top:151px;width:7px;height:1px;background-image:linear-gradient(to right,#9a9a9a 50%,transparent 50%);background-size:2px 1px"></div><div class="a" style="left:58px;top:146.5px;width:11px;height:11px;border:1px solid #919191;border-radius:2px;background:linear-gradient(#fff,#e4e4e4)"></div><div class="a" style="left:61px;top:151.5px;width:5px;height:1px;background:#4a5ab8"></div><div class="a" style="left:63px;top:149.5px;width:1px;height:5px;background:#4a5ab8"></div><svg style="left:76px;top:141px" width="20" height="20" viewBox="0 0 20 20"><rect x="2" y="3.500" width="7.500" height="6" fill="#19d4d4" stroke="#2060a0" stroke-width="1"/><path d="M6 8.500l4.500 5.500h8" fill="none" stroke="#222" stroke-width="2.600"/></svg><div class="tr" style="left:103px;top:141px"><b style="font-size:15px;letter-spacing:-.15px">Excentrisch</b></div><div class="a" style="left:69px;top:171px;width:7px;height:1px;background-image:linear-gradient(to right,#9a9a9a 50%,transparent 50%);background-size:2px 1px"></div><div class="a" style="left:58px;top:166.5px;width:11px;height:11px;border:1px solid #919191;border-radius:2px;background:linear-gradient(#fff,#e4e4e4)"></div><div class="a" style="left:61px;top:171.5px;width:5px;height:1px;background:#4a5ab8"></div><div class="a" style="left:63px;top:169.5px;width:1px;height:5px;background:#4a5ab8"></div><svg style="left:76px;top:161px" width="20" height="20" viewBox="0 0 20 20"><rect x="1" y="7" width="18" height="2.200" fill="#222"/><path d="M2 10.500h3L2 14h3M6.500 10.500h3l-3 3.500h3M11 10.500h3l-3 3.500h3M15.500 10.500h3l-3 3.500h3" fill="none" stroke="#1818e8" stroke-width="1.100"/></svg><div class="tr" style="left:103px;top:161px"><b style="font-size:15px;letter-spacing:-.15px">Elastische ondersteuning</b></div><div class="a" style="left:69px;top:191px;width:7px;height:1px;background-image:linear-gradient(to right,#9a9a9a 50%,transparent 50%);background-size:2px 1px"></div><div class="a" style="left:58px;top:186.5px;width:11px;height:11px;border:1px solid #919191;border-radius:2px;background:linear-gradient(#fff,#e4e4e4)"></div><div class="a" style="left:61px;top:191.5px;width:5px;height:1px;background:#4a5ab8"></div><div class="a" style="left:63px;top:189.5px;width:1px;height:5px;background:#4a5ab8"></div><svg style="left:76px;top:181px" width="20" height="20" viewBox="0 0 20 20"><path d="M10 3 17.500 11.500H2.500Z" fill="#19d4d4" stroke="#1a6a78" stroke-width="1"/><path d="M1 12.500h18" stroke="#111" stroke-width="1.300"/><path d="M5 13.500 3 17M9.500 13.500 7.500 17M14 13.500 12 17" stroke="#222" stroke-width="1.100"/></svg><div class="tr" style="left:103px;top:181px"><b style="font-size:15px;letter-spacing:-.15px">Oplegging</b></div><div class="a" style="left:69px;top:211px;width:7px;height:1px;background-image:linear-gradient(to right,#9a9a9a 50%,transparent 50%);background-size:2px 1px"></div><div class="a" style="left:58px;top:206.5px;width:11px;height:11px;border:1px solid #919191;border-radius:2px;background:linear-gradient(#fff,#e4e4e4)"></div><div class="a" style="left:61px;top:211.5px;width:5px;height:1px;background:#4a5ab8"></div><div class="a" style="left:63px;top:209.5px;width:1px;height:5px;background:#4a5ab8"></div><svg style="left:76px;top:201px" width="20" height="20" viewBox="0 0 20 20"><path d="M3.500 4.500h13v7.500h-13zM7.800 4.500v7.500M12.200 4.500v7.500" fill="none" stroke="#109020" stroke-width="1.500"/><path d="M1 15.500h18" stroke="#2a5ab0" stroke-width="1.500"/><rect x="0" y="14" width="3" height="3" fill="#fff" stroke="#2a5ab0" stroke-width=".9"/><rect x="17" y="14" width="3" height="3" fill="#fff" stroke="#2a5ab0" stroke-width=".9"/></svg><div class="tr" style="left:103px;top:201px"><b style="font-size:15px;letter-spacing:-.15px">Lasten</b></div><div class="a" style="left:45px;top:231px;width:7px;height:1px;background-image:linear-gradient(to right,#9a9a9a 50%,transparent 50%);background-size:2px 1px"></div><div class="a" style="left:34px;top:226.5px;width:11px;height:11px;border:1px solid #919191;border-radius:2px;background:linear-gradient(#fff,#e4e4e4)"></div><div class="a" style="left:37px;top:231.5px;width:5px;height:1px;background:#4a5ab8"></div><svg style="left:52px;top:221px" width="20" height="20" viewBox="0 0 20 20"><path d="M0 2 10 9 20 2V9H0Z" fill="#d818c8"/><path d="M0 9h20" stroke="#111" stroke-width="1.500"/><path d="M0 9.500v6l10-3Z" fill="#1818f0"/><path d="M10 12.500h10v7Z" fill="#2828f8"/><path d="M3 13h17" stroke="#111" stroke-width="1.400"/></svg><div class="tr" style="left:79px;top:221px"><b style="font-size:15px;letter-spacing:-.15px">Resultaten</b></div><div class="a" style="left:64px;top:251px;width:12px;height:1px;background-image:linear-gradient(to right,#9a9a9a 50%,transparent 50%);background-size:2px 1px"></div><svg style="left:76px;top:241px" width="20" height="20" viewBox="0 0 20 20"><path d="M4.200 7.300a5.800 5.800 0 1 1 11.600 0c0 3-2.300 3.800-2.800 6.700H7C6.500 11.100 4.200 10.300 4.200 7.300Z" fill="#bcd6ee" stroke="#86b0da" stroke-width="1.200"/><ellipse cx="8.600" cy="5.800" rx="2.600" ry="2.900" fill="#f0f8ff" opacity=".9"/><path d="M7.800 14h4.400v3.300c0 1.600-4.400 1.600-4.400 0Z" fill="#9a9a9a" stroke="#4a4a4a" stroke-width=".8"/><path d="M9.300 14.500v3.500" stroke="#e8e8e8" stroke-width=".9"/><path d="M8.700 18.400h2.600v1h-2.600Z" fill="#222"/></svg><div class="tr" style="left:103px;top:242.5px;font-size:14px;letter-spacing:-.33px">L.E. berekeningsresultaten</div><div class="a" style="left:64px;top:271px;width:12px;height:1px;background-image:linear-gradient(to right,#9a9a9a 50%,transparent 50%);background-size:2px 1px"></div><svg style="left:76px;top:261px" width="20" height="20" viewBox="0 0 20 20"><path d="M4.200 7.300a5.800 5.800 0 1 1 11.600 0c0 3-2.300 3.800-2.800 6.700H7C6.500 11.100 4.200 10.300 4.200 7.300Z" fill="#e4dc50" stroke="#f0a414" stroke-width="1.200"/><ellipse cx="8.600" cy="5.800" rx="2.600" ry="2.900" fill="#fbfbc0" opacity=".9"/><path d="M7.800 14h4.400v3.300c0 1.600-4.400 1.600-4.400 0Z" fill="#9a9a9a" stroke="#4a4a4a" stroke-width=".8"/><path d="M9.300 14.500v3.500" stroke="#e8e8e8" stroke-width=".9"/><path d="M8.700 18.400h2.600v1h-2.600Z" fill="#222"/></svg><div class="tr" style="left:103px;top:261px"><b style="font-size:15px;letter-spacing:-.15px">Analyseresultaten</b></div><div class="a" style="left:64px;top:291px;width:12px;height:1px;background-image:linear-gradient(to right,#9a9a9a 50%,transparent 50%);background-size:2px 1px"></div><svg style="left:76px;top:281px" width="20" height="20" viewBox="0 0 20 20"><path d="M4.200 7.300a5.800 5.800 0 1 1 11.600 0c0 3-2.300 3.800-2.800 6.700H7C6.500 11.100 4.200 10.300 4.200 7.300Z" fill="#e4dc50" stroke="#f0a414" stroke-width="1.200"/><ellipse cx="8.600" cy="5.800" rx="2.600" ry="2.900" fill="#fbfbc0" opacity=".9"/><path d="M7.800 14h4.400v3.300c0 1.600-4.400 1.600-4.400 0Z" fill="#9a9a9a" stroke="#4a4a4a" stroke-width=".8"/><path d="M9.300 14.500v3.500" stroke="#e8e8e8" stroke-width=".9"/><path d="M8.700 18.400h2.600v1h-2.600Z" fill="#222"/></svg><div class="tr" style="left:103px;top:281px"><b style="font-size:15px;letter-spacing:-.15px">Maak meerdere diagrammen mogelijk</b></div><div class="a" style="left:64px;top:311px;width:12px;height:1px;background-image:linear-gradient(to right,#9a9a9a 50%,transparent 50%);background-size:2px 1px"></div><svg style="left:76px;top:301px" width="20" height="20" viewBox="0 0 20 20"><path d="M4.200 7.300a5.800 5.800 0 1 1 11.600 0c0 3-2.300 3.800-2.800 6.700H7C6.500 11.100 4.200 10.300 4.200 7.300Z" fill="#bcd6ee" stroke="#86b0da" stroke-width="1.200"/><ellipse cx="8.600" cy="5.800" rx="2.600" ry="2.900" fill="#f0f8ff" opacity=".9"/><path d="M7.800 14h4.400v3.300c0 1.600-4.400 1.600-4.400 0Z" fill="#9a9a9a" stroke="#4a4a4a" stroke-width=".8"/><path d="M9.300 14.500v3.500" stroke="#e8e8e8" stroke-width=".9"/><path d="M8.700 18.400h2.600v1h-2.600Z" fill="#222"/></svg><div class="tr" style="left:103px;top:302.5px;font-size:14px;letter-spacing:-.33px">Interne Equilibrium\Interne krachten</div><div class="a" style="left:64px;top:331px;width:12px;height:1px;background-image:linear-gradient(to right,#9a9a9a 50%,transparent 50%);background-size:2px 1px"></div><svg style="left:76px;top:321px" width="20" height="20" viewBox="0 0 20 20"><path d="M4.200 7.300a5.800 5.800 0 1 1 11.600 0c0 3-2.300 3.800-2.800 6.700H7C6.500 11.100 4.200 10.300 4.200 7.300Z" fill="#bcd6ee" stroke="#86b0da" stroke-width="1.200"/><ellipse cx="8.600" cy="5.800" rx="2.600" ry="2.900" fill="#f0f8ff" opacity=".9"/><path d="M7.800 14h4.400v3.300c0 1.600-4.400 1.600-4.400 0Z" fill="#9a9a9a" stroke="#4a4a4a" stroke-width=".8"/><path d="M9.300 14.500v3.500" stroke="#e8e8e8" stroke-width=".9"/><path d="M8.700 18.400h2.600v1h-2.600Z" fill="#222"/></svg><div class="tr" style="left:103px;top:322.5px;font-size:14px;letter-spacing:-.33px">Relatieve spanningen</div><div class="a" style="left:64px;top:351px;width:12px;height:1px;background-image:linear-gradient(to right,#9a9a9a 50%,transparent 50%);background-size:2px 1px"></div><svg style="left:76px;top:341px" width="20" height="20" viewBox="0 0 20 20"><path d="M4.200 7.300a5.800 5.800 0 1 1 11.600 0c0 3-2.300 3.800-2.800 6.700H7C6.500 11.100 4.200 10.300 4.200 7.300Z" fill="#e4dc50" stroke="#f0a414" stroke-width="1.200"/><ellipse cx="8.600" cy="5.800" rx="2.600" ry="2.900" fill="#fbfbc0" opacity=".9"/><path d="M7.800 14h4.400v3.300c0 1.600-4.400 1.600-4.400 0Z" fill="#9a9a9a" stroke="#4a4a4a" stroke-width=".8"/><path d="M9.300 14.500v3.500" stroke="#e8e8e8" stroke-width=".9"/><path d="M8.700 18.400h2.600v1h-2.600Z" fill="#222"/></svg><div class="tr" style="left:103px;top:341px"><b style="font-size:15px;letter-spacing:-.15px">Krachten legenda</b></div><div class="a" style="left:69px;top:371px;width:7px;height:1px;background-image:linear-gradient(to right,#9a9a9a 50%,transparent 50%);background-size:2px 1px"></div><div class="a" style="left:58px;top:366.5px;width:11px;height:11px;border:1px solid #919191;border-radius:2px;background:linear-gradient(#fff,#e4e4e4)"></div><div class="a" style="left:61px;top:371.5px;width:5px;height:1px;background:#4a5ab8"></div><div class="a" style="left:63px;top:369.5px;width:1px;height:5px;background:#4a5ab8"></div><svg style="left:76px;top:361px" width="20" height="20" viewBox="0 0 20 19"><rect x="1" y="11" width="18" height="6" fill="#e010d0"/><rect x="1" y="11" width="18" height="2.500" fill="#f040e0"/><path d="M1 17.500h18" stroke="#300030" stroke-width="1.600"/><text x="7" y="8" font-family="Liberation Sans,sans-serif" font-weight="bold" font-size="8.500" fill="#2020e8">N<tspan font-size="6" dy="1.500">x</tspan></text></svg><div class="tr" style="left:103px;top:361px"><b style="font-size:15px;letter-spacing:-.15px">Normaalkracht (Nx)</b></div><div class="a" style="left:69px;top:391px;width:7px;height:1px;background-image:linear-gradient(to right,#9a9a9a 50%,transparent 50%);background-size:2px 1px"></div><div class="a" style="left:58px;top:386.5px;width:11px;height:11px;border:1px solid #919191;border-radius:2px;background:linear-gradient(#fff,#e4e4e4)"></div><div class="a" style="left:61px;top:391.5px;width:5px;height:1px;background:#4a5ab8"></div><div class="a" style="left:63px;top:389.5px;width:1px;height:5px;background:#4a5ab8"></div><svg style="left:76px;top:381px" width="20" height="20" viewBox="0 0 20 19"><path d="M1 1v8h10Z" fill="#1818f0"/><path d="M9 9.500h10V18Z" fill="#2828f8"/><path d="M1 9.500h18" stroke="#101040" stroke-width="1.600"/><text x="9" y="7" font-family="Liberation Sans,sans-serif" font-weight="bold" font-size="8.500" fill="#2020e8">V<tspan font-size="6" dy="1.500">z</tspan></text></svg><div class="tr" style="left:103px;top:381px"><b style="font-size:15px;letter-spacing:-.15px">Dwarskracht (Vz)</b></div><div class="a" style="left:69px;top:411px;width:7px;height:1px;background-image:linear-gradient(to right,#9a9a9a 50%,transparent 50%);background-size:2px 1px"></div><div class="a" style="left:58px;top:406.5px;width:11px;height:11px;border:1px solid #919191;border-radius:2px;background:linear-gradient(#fff,#e4e4e4)"></div><div class="a" style="left:61px;top:411.5px;width:5px;height:1px;background:#4a5ab8"></div><div class="a" style="left:63px;top:409.5px;width:1px;height:5px;background:#4a5ab8"></div><svg style="left:76px;top:401px" width="20" height="20" viewBox="0 0 20 19"><path d="M1 5v12h18Z" fill="#e010d0"/><path d="M1 5v6l10 6h8Z" fill="#f050e0" opacity=".5"/><path d="M1 17.500h18" stroke="#300030" stroke-width="1.600"/><text x="7" y="7.5" font-family="Liberation Sans,sans-serif" font-weight="bold" font-size="8.500" fill="#2020e8">M<tspan font-size="6" dy="1.500">y</tspan></text></svg><div class="tr" style="left:103px;top:401px"><b style="font-size:15px;letter-spacing:-.15px">Momenten (My)</b></div><div class="a" style="left:69px;top:431px;width:7px;height:1px;background-image:linear-gradient(to right,#9a9a9a 50%,transparent 50%);background-size:2px 1px"></div><div class="a" style="left:58px;top:426.5px;width:11px;height:11px;border:1px solid #919191;border-radius:2px;background:linear-gradient(#fff,#e4e4e4)"></div><div class="a" style="left:61px;top:431.5px;width:5px;height:1px;background:#4a5ab8"></div><div class="a" style="left:63px;top:429.5px;width:1px;height:5px;background:#4a5ab8"></div><svg style="left:76px;top:421px" width="20" height="20" viewBox="0 0 20 20"><rect x="1" y="3" width="18" height="1.800" fill="#4a78b8"/><rect x="8.500" y="2.300" width="3" height="3.200" fill="#fff" stroke="#4a78b8" stroke-width=".6"/><path d="M2.500 7.500c4 6 11 6 15 0" fill="none" stroke="#e81010" stroke-width="1.200"/><circle cx="10" cy="12.300" r="1.700" fill="#fff" stroke="#e81010" stroke-width="1.200"/></svg><div class="tr" style="left:103px;top:421px"><b style="font-size:15px;letter-spacing:-.15px">Verplaatsing/Doorbuigingen</b></div><div class="a" style="left:69px;top:451px;width:7px;height:1px;background-image:linear-gradient(to right,#9a9a9a 50%,transparent 50%);background-size:2px 1px"></div><div class="a" style="left:58px;top:446.5px;width:11px;height:11px;border:1px solid #919191;border-radius:2px;background:linear-gradient(#fff,#e4e4e4)"></div><div class="a" style="left:61px;top:451.5px;width:5px;height:1px;background:#4a5ab8"></div><div class="a" style="left:63px;top:449.5px;width:1px;height:5px;background:#4a5ab8"></div><svg style="left:76px;top:441px" width="20" height="20" viewBox="0 0 20 20"><path d="M9 11 16 18.500H2Z" fill="#19d4d4" stroke="#111" stroke-width="1.300"/><path d="M9 11V3M9 11h8" stroke="#109020" stroke-width="1.500"/><path d="M6.500 5.500 9 1.500l2.500 4ZM15 8.500l4 2.500-4 2.500Z" fill="#109020"/></svg><div class="tr" style="left:103px;top:441px"><b style="font-size:15px;letter-spacing:-.15px">Oplegreacties</b></div><div class="a" style="left:69px;top:471px;width:7px;height:1px;background-image:linear-gradient(to right,#9a9a9a 50%,transparent 50%);background-size:2px 1px"></div><div class="a" style="left:58px;top:466.5px;width:11px;height:11px;border:1px solid #919191;border-radius:2px;background:linear-gradient(#fff,#e4e4e4)"></div><div class="a" style="left:61px;top:471.5px;width:5px;height:1px;background:#4a5ab8"></div><div class="a" style="left:63px;top:469.5px;width:1px;height:5px;background:#4a5ab8"></div><svg style="left:76px;top:461px" width="20" height="20" viewBox="0 0 20 20"><path d="M2 2c2 1.500 2 2.500 4 2.500h8c2 0 2-1 4-2.500v16c-2-1.500-2-2.500-4-2.500H6c-2 0-2 1-4 2.500Z" fill="#18a0f8"/><path d="M5 4.500v11M8 4.500v11M11 4.500v11M14 4.500v11M2 7.500h16M2 12.500h16" stroke="#b0e0ff" stroke-width=".8"/><path d="M0 10h20" stroke="#e81010" stroke-width="1.300"/></svg><div class="tr" style="left:103px;top:461px"><b style="font-size:15px;letter-spacing:-.15px">Tegendruk</b></div><div class="a" style="left:69px;top:491px;width:7px;height:1px;background-image:linear-gradient(to right,#9a9a9a 50%,transparent 50%);background-size:2px 1px"></div><div class="a" style="left:58px;top:486.5px;width:11px;height:11px;border:1px solid #919191;border-radius:2px;background:linear-gradient(#fff,#e4e4e4)"></div><div class="a" style="left:61px;top:491.5px;width:5px;height:1px;background:#4a5ab8"></div><div class="a" style="left:63px;top:489.5px;width:1px;height:5px;background:#4a5ab8"></div><svg style="left:76px;top:481px" width="20" height="20" viewBox="0 0 20 20"><circle cx="6.500" cy="10" r="3.800" fill="#fff" stroke="#111" stroke-width="1.300"/><path d="M2 10h6M11 10.500h8" stroke="#111" stroke-width="1.600"/></svg><div class="tr" style="left:103px;top:481px"><b style="font-size:15px;letter-spacing:-.15px">Plastisch Scharnier</b></div></div>
<div class="a ms c" style="left:1618px;top:717px;width:135px;height:25px;border:1px solid #d0d0d0;border-radius:4px;background:#fdfdfd;line-height:25px;box-shadow:0 1px 1px rgba(0,0,0,.08)">Reset lagen</div>
<div class="tab ui" style="left:1457px;top:751.3px;width:68px;height:23.5px;line-height:25px;padding:0 0 0 24px">Lagen</div>
<svg style="left:1459px;top:753.5px" width="20" height="20" viewBox="0 0 20 20"><rect x="6" y="1" width="13" height="14" rx="2" fill="#c4d8ee" stroke="#9ab0d4" stroke-width="1"/><rect x="4" y="3" width="13" height="14" rx="2" fill="#b8d0ea" stroke="#88a0cc" stroke-width="1"/><rect x="1.500" y="5.500" width="13" height="14" rx="2.500" fill="#a8c4e4" stroke="#4a5ae0" stroke-width="1.500"/><rect x="3.500" y="7.500" width="9" height="10" rx="1" fill="#bcd2ec"/></svg>
<svg style="left:1534px;top:753.5px" width="20" height="20" viewBox="0 0 20 20"><rect x="6" y="1" width="13" height="14" rx="2" fill="#c4d8ee" stroke="#9ab0d4" stroke-width="1"/><rect x="4" y="3" width="13" height="14" rx="2" fill="#b8d0ea" stroke="#88a0cc" stroke-width="1"/><rect x="1.500" y="5.500" width="13" height="14" rx="2.500" fill="#a8c4e4" stroke="#4a5ae0" stroke-width="1.500"/><rect x="3.500" y="7.500" width="9" height="10" rx="1" fill="#bcd2ec"/></svg>
<div class="a ui" style="left:1558px;top:758px;line-height:16px">Constructiedeel Lagen</div>
<svg style="left:1716px;top:759px" width="18" height="10" viewBox="0 0 18 10"><path d="M1 5C4 0 14 0 17 5 14 10 4 10 1 5Z" fill="#fff" stroke="#18a8e8" stroke-width="1.600"/><circle cx="9" cy="5" r="2.500" fill="#111"/></svg>
<div class="a ui" style="left:1738px;top:758px;line-height:16px;letter-spacing:.83px">Beeldinstellingen</div>
<!-- bottom -->
<div class="a" style="left:728.4px;top:787px;width:1190px;height:176px;background:#f0f0f0"></div>
<div class="hdr ui" style="left:728.4px;top:785.8px;width:1190px;height:24.6px;line-height:25.6px">Knoopverplaatsingen</div><svg style="left:1882px;top:792.0999999999999px" width="10" height="13" viewBox="0 0 10 13"><path d="M2.500 1.500h5M3.500 1.500v5.500M6.500 1.500v5.500M7.500 1.500v5.500M1 7.500h8M5 7.500V12" fill="none" stroke="#3e6aaa" stroke-width="1.200"/></svg><svg style="left:1902px;top:792.5999999999999px" width="10" height="10" viewBox="0 0 10 10"><path d="M1 1l8 8M9 1 1 9" stroke="#3e6aaa" stroke-width="1.500"/></svg>
<div class="a" style="left:728.4px;top:810.3px;width:1190px;height:2.2px;background:linear-gradient(#5e5e5e,#8a8a8a)"></div><div class="a" style="left:728.4px;top:810.3px;width:1.7px;height:153px;background:#6e6e6e"></div>
<div class="a" style="left:730px;top:812.5px;width:524.5px;height:97.5px;background:#fff"></div>
<div class="gh ms" style="left:730px;top:812.5px;width:74.5px;height:22px;line-height:24px">Knoop</div>
<div class="gh ms" style="left:804.5px;top:812.5px;width:75px;height:22px;line-height:24px">B.G.</div>
<div class="gh ms" style="left:879.5px;top:812.5px;width:125px;height:22px;line-height:24px">X</div>
<div class="gh ms" style="left:1004.5px;top:812.5px;width:125px;height:22px;line-height:24px">Z</div>
<div class="gh ms" style="left:1129.5px;top:812.5px;width:125px;height:22px;line-height:24px">Ry</div>
<div class="gc ms c" style="left:730px;top:834.5px;width:74.5px;height:18.799999999999955px">K1</div>
<div class="gc ms r" style="left:879.5px;top:834.5px;width:125px;height:18.799999999999955px;background:#fff">-0.0000</div>
<div class="gc ms r" style="left:1004.5px;top:834.5px;width:125px;height:18.799999999999955px;background:#fff">0.0000</div>
<div class="gc ms r" style="left:1129.5px;top:834.5px;width:125px;height:18.799999999999955px;background:#fff">-0.000e-03</div>
<div class="gc ms c" style="left:730px;top:853.3px;width:74.5px;height:18.90000000000009px">K2</div>
<div class="gc ms r" style="left:879.5px;top:853.3px;width:125px;height:18.90000000000009px;background:#e4e4e4">-0.0000</div>
<div class="gc ms r" style="left:1004.5px;top:853.3px;width:125px;height:18.90000000000009px;background:#e4e4e4">0.0001</div>
<div class="gc ms r" style="left:1129.5px;top:853.3px;width:125px;height:18.90000000000009px;background:#e4e4e4">-0.000e-03</div>
<div class="gc ms c" style="left:730px;top:872.2px;width:74.5px;height:18.899999999999977px">K3</div>
<div class="gc ms r" style="left:879.5px;top:872.2px;width:125px;height:18.899999999999977px;background:#fff">-0.0000</div>
<div class="gc ms r" style="left:1004.5px;top:872.2px;width:125px;height:18.899999999999977px;background:#fff">0.0000</div>
<div class="gc ms r" style="left:1129.5px;top:872.2px;width:125px;height:18.899999999999977px;background:#fff">0.027e-03</div>
<div class="gc ms c" style="left:730px;top:891.1px;width:74.5px;height:18.899999999999977px">K4</div>
<div class="gc ms r" style="left:879.5px;top:891.1px;width:125px;height:18.899999999999977px;background:#e4e4e4">-0.0001</div>
<div class="gc ms r" style="left:1004.5px;top:891.1px;width:125px;height:18.899999999999977px;background:#e4e4e4">0.0000</div>
<div class="gc ms r" style="left:1129.5px;top:891.1px;width:125px;height:18.899999999999977px;background:#e4e4e4">0.032e-03</div>
<div class="gc ms c" style="left:804.5px;top:834.5px;width:75px;height:75.5px">B.G.1</div>
<div class="a" style="left:730px;top:834.3px;width:75.3px;height:20.6px;border:1.6px solid #000;border-right-width:2.8px;border-bottom-width:3px"></div><div class="a" style="left:802.4px;top:852px;width:4.6px;height:4.2px;background:#000"></div>
<div class="tabstrip" style="left:728px;top:963px;width:1192px;height:27px"></div>
<div class="tab ui" style="left:734px;top:963px;width:130px;height:21px;padding:0 0 0 6px;letter-spacing:.2px">Belastingsgevallen</div>
<svg style="left:1876px;top:969px" width="32" height="12" viewBox="0 0 32 12"><path d="M7.500 1.500v9L2 6ZM24.500 1.500v9L30 6Z" fill="none" stroke="#333" stroke-width="1"/></svg>
<!-- status -->
<div class="a" style="left:0;top:990px;width:1920px;height:30px;border-top:1px solid #7b9ad0;background:linear-gradient(#d9e8fc 0,#c3d9f8 30%,#aecaf2 60%,#b9d3f7 100%);box-shadow:inset 0 1px 0 #eaf3fe"></div>
<div class="a" style="left:125px;top:994px;width:1px;height:24px;background:#8eaede;box-shadow:1px 0 0 #eef5fe"></div>
<div class="a" style="left:211px;top:994px;width:1px;height:24px;background:#8eaede;box-shadow:1px 0 0 #eef5fe"></div>
<div class="a" style="left:393px;top:994px;width:1px;height:24px;background:#8eaede;box-shadow:1px 0 0 #eef5fe"></div>
<div class="a ui" style="left:11px;top:997.500px;line-height:16px;letter-spacing:0.6px">2D-Raamwerk</div>
<div class="a ui" style="left:139px;top:997.500px;line-height:16px;letter-spacing:0px">[NEN-EN]</div>
<div class="a ui" style="left:224px;top:997.500px;line-height:16px;letter-spacing:0.45px">Lengte [m] Krachten [kN]</div>
<div class="a ui" style="left:406px;top:997.500px;line-height:16px;letter-spacing:0.45px">x=</div>
<div class="a ui" style="left:438px;top:997.500px;line-height:16px;letter-spacing:0.45px">11.187 z=</div>
<div class="a ui" style="left:517px;top:997.500px;line-height:16px;letter-spacing:0.45px">3.834</div>
<div class="dd" style="left:111px;top:1003px"></div>
<div class="a" style="left:0;top:30px;width:1.1px;height:990px;background:rgba(120,150,200,.55)"></div>
</body></html>
